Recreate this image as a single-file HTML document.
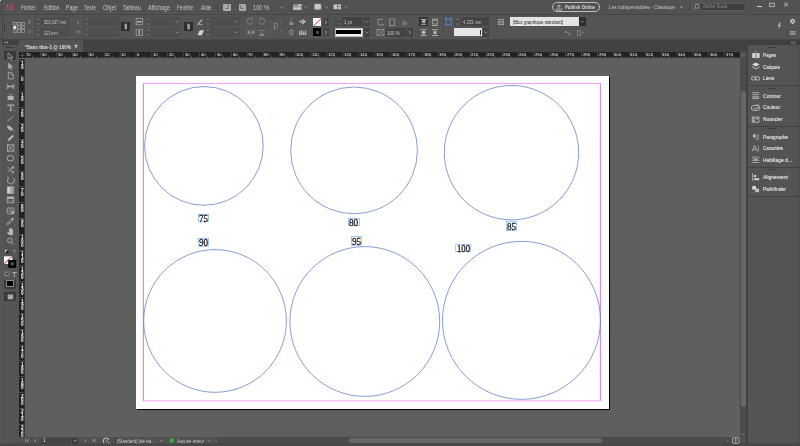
<!DOCTYPE html>
<html><head><meta charset="utf-8">
<style>
*{margin:0;padding:0;box-sizing:border-box}
html,body{width:800px;height:446px;overflow:hidden;background:#535353;font-family:"Liberation Sans",sans-serif;position:relative}
.a{position:absolute}
.t{white-space:nowrap}

</style></head><body>
<div class="a" style="left:0;top:0;width:800px;height:446px;overflow:hidden;filter:blur(0.3px)">
<div class="a" style="left:0px;top:0px;width:800px;height:14px;background:#525252;"></div>
<div class="a" style="left:0px;top:13.5px;width:800px;height:1px;background:#464646;"></div>
<div class="a" style="left:0px;top:14.5px;width:800px;height:24px;background:#545454;"></div>
<div class="a" style="left:0px;top:38.5px;width:800px;height:1.9px;background:#474747;"></div>
<div class="a" style="left:0px;top:40px;width:2.2px;height:406px;background:#565656;"></div>
<div class="a" style="left:1.9px;top:40px;width:0.7px;height:406px;background:#474747;"></div>
<div class="a" style="left:2.2px;top:40px;width:16.6px;height:406px;background:#545454;"></div>
<div class="a" style="left:2.2px;top:40px;width:16.6px;height:4.9px;background:#424242;"></div>
<div class="a" style="left:18.6px;top:40px;width:0.6px;height:406px;background:#3e3e3e;"></div>
<div class="a" style="left:19px;top:40px;width:728px;height:12px;background:#424242;"></div>
<div class="a" style="left:19px;top:40px;width:64.4px;height:12px;background:#545454;"></div>
<div class="a" style="left:25px;top:58px;width:715px;height:379px;background:#5f5f5f;"></div>
<div class="a" style="left:19px;top:52px;width:721px;height:6.2px;background:#222222;"></div>
<div class="a" style="left:19px;top:52px;width:6.2px;height:385px;background:#222222;"></div>
<div class="a" style="left:740px;top:52px;width:6.4px;height:385px;background:#4b4b4b;"></div>
<div class="a" style="left:740px;top:52px;width:6.4px;height:6.2px;background:#535353;"></div>
<div class="a" style="left:740.5px;top:91px;width:5.4px;height:316px;background:#676767;border-radius:2.7px"></div>
<div class="a" style="left:19px;top:437px;width:727.4px;height:6.5px;background:#515151;"></div>
<div class="a" style="left:216px;top:437.3px;width:524px;height:6.1px;background:#4b4b4b;"></div>
<div class="a" style="left:348.8px;top:437.5px;width:253.4px;height:5.8px;background:#676767;border-radius:2.9px"></div>
<div class="a" style="left:0px;top:443.4px;width:800px;height:2.6px;background:#484848;"></div>
<div class="a" style="left:746.4px;top:40px;width:1.4px;height:403.4px;background:#414141;"></div>
<div class="a" style="left:747.6px;top:40px;width:52.4px;height:403.4px;background:#545454;"></div>
<div class="a" style="left:747.6px;top:40px;width:52.4px;height:5.2px;background:#3f3f3f;"></div>
<div class="a t" style="left:5.9px;top:2.782px;font:normal 9.000px/9.000px 'Liberation Sans';color:#cc3f80;transform:scaleX(0.9593);transform-origin:0 0;-webkit-text-stroke:0.2px #cc3f80;">Id</div>
<div class="a" style="left:0px;top:0px;width:1.3px;height:1.3px;background:#dcdcdc;"></div>
<div class="a" style="left:1.3px;top:0px;width:0.7px;height:14px;background:#4a4a4a;"></div>
<div class="a t" style="left:21.4px;top:5.167px;font:normal 6.300px/6.300px 'Liberation Sans';color:#c6c6c6;transform:scaleX(0.7727);transform-origin:0 0;">Fichier</div>
<div class="a t" style="left:43.5px;top:5.167px;font:normal 6.300px/6.300px 'Liberation Sans';color:#c6c6c6;transform:scaleX(0.7999);transform-origin:0 0;">Edition</div>
<div class="a t" style="left:65.5px;top:5.167px;font:normal 6.300px/6.300px 'Liberation Sans';color:#c6c6c6;transform:scaleX(0.8160);transform-origin:0 0;">Page</div>
<div class="a t" style="left:84px;top:5.167px;font:normal 6.300px/6.300px 'Liberation Sans';color:#c6c6c6;transform:scaleX(0.7973);transform-origin:0 0;">Texte</div>
<div class="a t" style="left:103px;top:5.167px;font:normal 6.300px/6.300px 'Liberation Sans';color:#c6c6c6;transform:scaleX(0.8638);transform-origin:0 0;">Objet</div>
<div class="a t" style="left:123px;top:5.167px;font:normal 6.300px/6.300px 'Liberation Sans';color:#c6c6c6;transform:scaleX(0.8025);transform-origin:0 0;">Tableau</div>
<div class="a t" style="left:148px;top:5.167px;font:normal 6.300px/6.300px 'Liberation Sans';color:#c6c6c6;transform:scaleX(0.8416);transform-origin:0 0;">Affichage</div>
<div class="a t" style="left:177px;top:5.167px;font:normal 6.300px/6.300px 'Liberation Sans';color:#c6c6c6;transform:scaleX(0.7373);transform-origin:0 0;">Fenêtre</div>
<div class="a t" style="left:200.5px;top:5.167px;font:normal 6.300px/6.300px 'Liberation Sans';color:#c6c6c6;transform:scaleX(0.8331);transform-origin:0 0;">Aide</div>
<div class="a" style="left:216.5px;top:3px;width:0.6px;height:8px;background:#4a4a4a;"></div>
<div class="a" style="left:223.3px;top:3.5px;width:7.4px;height:7.4px;background:#ababab;border-radius:1px"></div>
<div class="a" style="left:224.9px;top:5.1px;width:4.2px;height:4.2px;background:#7a7a7a;"></div>
<div class="a t" style="left:225.3px;top:5.722px;font:bold 3.400px/3.400px 'Liberation Sans';color:#c8c8c8;transform:scaleX(0.9023);transform-origin:0 0;">Br</div>
<div class="a" style="left:238.5px;top:3.5px;width:7.4px;height:7.4px;background:#ababab;border-radius:1px"></div>
<div class="a" style="left:240.1px;top:5.1px;width:4.2px;height:4.2px;background:#7a7a7a;"></div>
<div class="a t" style="left:240.5px;top:5.722px;font:bold 3.400px/3.400px 'Liberation Sans';color:#c8c8c8;transform:scaleX(1.0028);transform-origin:0 0;">St</div>
<div class="a t" style="left:253px;top:5.167px;font:normal 6.300px/6.300px 'Liberation Sans';color:#c6c6c6;transform:scaleX(0.8961);transform-origin:0 0;">100 %</div>
<svg class="a" style="left:0;top:0" width="800" height="446" viewBox="0 0 800 446"><path d="M280.5 6.8l1.5 1.5 1.5-1.5" fill="none" stroke="#9a9a9a" stroke-width="0.7"/></svg>
<div class="a" style="left:290px;top:3px;width:0.6px;height:8px;background:#4a4a4a;"></div>
<svg class="a" style="left:0;top:0" width="800" height="446" viewBox="0 0 800 446"><rect x="293" y="4" width="4.4" height="2.2" fill="#8a8a8a"/><rect x="293" y="6.4" width="8.6" height="3.4" fill="#c8c8c8"/><rect x="293" y="7.6" width="8.6" height="0.5" fill="#8a8a8a"/><rect x="297.8" y="4" width="3.8" height="2.2" fill="#b8b8b8"/><path d="M304.2 6.6l1.5 1.3 1.5-1.3" fill="none" stroke="#9a9a9a" stroke-width="0.7"/><rect x="314.4" y="3.8" width="6.8" height="5.8" fill="#c8c8c8"/><path d="M314 3.4l1.6 1.6M321.6 3.4l-1.6 1.6M314 10l1.6-1.6M321.6 10l-1.6-1.6" stroke="#5a5a5a" stroke-width="0.6"/><path d="M325 6.6l1.5 1.3 1.5-1.3" fill="none" stroke="#9a9a9a" stroke-width="0.7"/><g fill="#c8c8c8"><rect x="333.6" y="4.4" width="3.4" height="4.8"/><rect x="337.6" y="4.4" width="3.4" height="2.1"/><rect x="337.6" y="7.1" width="3.4" height="2.1"/></g><path d="M345 6.6l1.5 1.3 1.5-1.3" fill="none" stroke="#9a9a9a" stroke-width="0.7"/></svg>
<div class="a" style="left:552px;top:1.6px;width:48px;height:10.8px;background:transparent;border:0.9px solid #bdbdbd;border-radius:5.4px"></div>
<svg class="a" style="left:0;top:0" width="800" height="446" viewBox="0 0 800 446"><g fill="none" stroke="#cfcfcf" stroke-width="0.8"><path d="M559 9.5V5M557.2 6.6L559 4.8 560.8 6.6M556.6 8.2v1.9h4.8V8.2"/></g></svg>
<div class="a t" style="left:565px;top:4.56px;font:bold 5.600px/5.600px 'Liberation Sans';color:#dcdcdc;transform:scaleX(0.7661);transform-origin:0 0;">Publish Online</div>
<div class="a" style="left:603.8px;top:3px;width:0.6px;height:8px;background:#4a4a4a;"></div>
<div class="a t" style="left:609px;top:4.86px;font:normal 5.600px/5.600px 'Liberation Sans';color:#c6c6c6;transform:scaleX(0.8559);transform-origin:0 0;">Les indispensables - Classique</div>
<svg class="a" style="left:0;top:0" width="800" height="446" viewBox="0 0 800 446"><path d="M680 6.6h3l-1.5 1.6z" fill="#b0b0b0"/></svg>
<div class="a" style="left:688.5px;top:3px;width:0.6px;height:8px;background:#4a4a4a;"></div>
<div class="a" style="left:692.7px;top:2.8px;width:53.6px;height:8.6px;background:#3f3f3f;border:0.6px solid #5a5a5a;border-radius:1px"></div>
<svg class="a" style="left:0;top:0" width="800" height="446" viewBox="0 0 800 446"><g fill="none" stroke="#c0c0c0" stroke-width="0.8"><circle cx="697.2" cy="6.3" r="2"/><path d="M695.8 7.8l-1.6 1.8"/></g><path d="M699.5 8.6h1.8l-0.9 1z" fill="#b0b0b0"/></svg>
<div class="a t" style="left:703px;top:4.429px;font:normal 5.400px/5.400px 'Liberation Sans';color:#8c8c8c;transform:scaleX(0.7852);transform-origin:0 0;">Adobe Stock</div>
<div class="a" style="left:756.5px;top:5.7px;width:5px;height:0.9px;background:#cfcfcf;"></div>
<div class="a" style="left:765.5px;top:1px;width:0.5px;height:11px;background:#4d4d4d;"></div>
<div class="a" style="left:777.6px;top:1px;width:0.5px;height:11px;background:#4d4d4d;"></div>
<svg class="a" style="left:0;top:0" width="800" height="446" viewBox="0 0 800 446"><rect x="769.6" y="3.2" width="4.6" height="3.2" fill="none" stroke="#c8c8c8" stroke-width="0.8"/><path d="M784 2.8l4 3.6M788 2.8l-4 3.6" stroke="#cfcfcf" stroke-width="0.8"/></svg>
<div class="a" style="left:1.8px;top:15px;width:0.7px;height:23.5px;background:#474747;"></div>
<div class="a" style="left:3.9px;top:22.6px;width:1.2px;height:8.4px;background:#3c3c3c;"></div>
<svg class="a" style="left:0;top:0" width="800" height="446" viewBox="0 0 800 446"><g fill="none" stroke="#b0b0b0" stroke-width="0.6"><rect x="13.25" y="22.3" width="2.9" height="2.8"/><rect x="13.25" y="29.8" width="2.9" height="2.8"/><rect x="17.400000000000002" y="22.3" width="2.9" height="2.8"/><rect x="17.400000000000002" y="26.05" width="2.9" height="2.8"/><rect x="17.400000000000002" y="29.8" width="2.9" height="2.8"/><rect x="21.55" y="22.3" width="2.9" height="2.8"/><rect x="21.55" y="26.05" width="2.9" height="2.8"/><rect x="21.55" y="29.8" width="2.9" height="2.8"/></g><circle cx="14.7" cy="27.45" r="1.6" fill="#f4f4f4"/></svg>
<div class="a t" style="left:27.6px;top:20.937px;font:normal 4.800px/4.800px 'Liberation Sans';color:#a8a8a8;transform:scaleX(0.8866);transform-origin:0 0;">X :</div>
<div class="a t" style="left:27.6px;top:31.337px;font:normal 4.800px/4.800px 'Liberation Sans';color:#a8a8a8;transform:scaleX(0.8866);transform-origin:0 0;">Y :</div>
<div class="a" style="left:34.2px;top:17.3px;width:7.8px;height:8.6px;background:#4d4d4d;"></div>
<svg class="a" style="left:0;top:0" width="800" height="446" viewBox="0 0 800 446"><path d="M36.300000000000004 19.900000000000002l1.8-1.3 1.8 1.3M36.300000000000004 23.299999999999997l1.8 1.3 1.8-1.3" fill="none" stroke="#8e8e8e" stroke-width="0.6"/></svg>
<div class="a" style="left:34.2px;top:28.0px;width:7.8px;height:8.6px;background:#4d4d4d;"></div>
<svg class="a" style="left:0;top:0" width="800" height="446" viewBox="0 0 800 446"><path d="M36.300000000000004 30.6l1.8-1.3 1.8 1.3M36.300000000000004 34.0l1.8 1.3 1.8-1.3" fill="none" stroke="#8e8e8e" stroke-width="0.6"/></svg>
<div class="a" style="left:42.1px;top:17.3px;width:28.2px;height:8.6px;background:#4e4e4e;"></div>
<div class="a" style="left:42.1px;top:28.0px;width:28.2px;height:8.6px;background:#4e4e4e;"></div>
<div class="a t" style="left:44px;top:20.39px;font:normal 5.800px/5.800px 'Liberation Sans';color:#c8c8c8;transform:scaleX(0.6828);transform-origin:0 0;">302,167 mm</div>
<div class="a t" style="left:44px;top:30.89px;font:normal 5.800px/5.800px 'Liberation Sans';color:#c8c8c8;transform:scaleX(0.6447);transform-origin:0 0;">213 mm</div>
<div class="a t" style="left:76.8px;top:20.937px;font:normal 4.800px/4.800px 'Liberation Sans';color:#a8a8a8;transform:scaleX(0.8250);transform-origin:0 0;">L :</div>
<div class="a t" style="left:76.8px;top:31.337px;font:normal 4.800px/4.800px 'Liberation Sans';color:#a8a8a8;transform:scaleX(0.7178);transform-origin:0 0;">H :</div>
<div class="a" style="left:82.6px;top:17.3px;width:7.8px;height:8.6px;background:#4d4d4d;"></div>
<svg class="a" style="left:0;top:0" width="800" height="446" viewBox="0 0 800 446"><path d="M84.7 19.900000000000002l1.8-1.3 1.8 1.3M84.7 23.299999999999997l1.8 1.3 1.8-1.3" fill="none" stroke="#8e8e8e" stroke-width="0.6"/></svg>
<div class="a" style="left:82.6px;top:28.0px;width:7.8px;height:8.6px;background:#4d4d4d;"></div>
<svg class="a" style="left:0;top:0" width="800" height="446" viewBox="0 0 800 446"><path d="M84.7 30.6l1.8-1.3 1.8 1.3M84.7 34.0l1.8 1.3 1.8-1.3" fill="none" stroke="#8e8e8e" stroke-width="0.6"/></svg>
<div class="a" style="left:90.4px;top:17.3px;width:28.8px;height:8.6px;background:#4e4e4e;"></div>
<div class="a" style="left:90.4px;top:28.0px;width:28.8px;height:8.6px;background:#4e4e4e;"></div>
<div class="a" style="left:121.2px;top:22px;width:9px;height:9.2px;background:#2d2d2d;border-radius:0.8px"></div>
<svg class="a" style="left:0;top:0" width="800" height="446" viewBox="0 0 800 446"><rect x="124.6" y="23.6" width="2.4" height="6" rx="1.1" fill="#b4b4b4"/><path d="M125.8 24.6v1.4M125.8 27.2v1.4" stroke="#3a3a3a" stroke-width="0.5"/><g fill="none" stroke="#b4b4b4" stroke-width="0.6"><rect x="136.1" y="18.6" width="6.2" height="6.2"/></g><g fill="#d0d0d0"><rect x="137.2" y="21.4" width="4" height="0.9"/><path d="M137 21.85l1.2-1.1v2.2zM141.4 21.85l-1.2-1.1v2.2z"/></g><g fill="none" stroke="#b4b4b4" stroke-width="0.6"><rect x="136.1" y="29.3" width="6.2" height="6.2"/></g><g fill="#d0d0d0"><rect x="138.75" y="30.4" width="0.9" height="4"/><path d="M139.2 30.2l-1.1 1.2h2.2zM139.2 34.6l-1.1-1.2h2.2z"/></g></svg>
<div class="a" style="left:144.6px;top:17.3px;width:7.8px;height:8.6px;background:#4d4d4d;"></div>
<svg class="a" style="left:0;top:0" width="800" height="446" viewBox="0 0 800 446"><path d="M146.7 19.900000000000002l1.8-1.3 1.8 1.3M146.7 23.299999999999997l1.8 1.3 1.8-1.3" fill="none" stroke="#8e8e8e" stroke-width="0.6"/></svg>
<div class="a" style="left:144.6px;top:28.0px;width:7.8px;height:8.6px;background:#4d4d4d;"></div>
<svg class="a" style="left:0;top:0" width="800" height="446" viewBox="0 0 800 446"><path d="M146.7 30.6l1.8-1.3 1.8 1.3M146.7 34.0l1.8 1.3 1.8-1.3" fill="none" stroke="#8e8e8e" stroke-width="0.6"/></svg>
<div class="a" style="left:152.4px;top:17.3px;width:27.6px;height:8.6px;background:#4e4e4e;"></div>
<div class="a" style="left:152.4px;top:28.0px;width:27.6px;height:8.6px;background:#4e4e4e;"></div>
<svg class="a" style="left:0;top:0" width="800" height="446" viewBox="0 0 800 446"><path d="M175.4 21.1l1.6 1.3 1.6-1.3" fill="none" stroke="#9c9c9c" stroke-width="0.7"/><path d="M175.4 31.7l1.6 1.3 1.6-1.3" fill="none" stroke="#9c9c9c" stroke-width="0.7"/></svg>
<div class="a" style="left:184px;top:22px;width:9.2px;height:9.2px;background:#2d2d2d;border-radius:0.8px"></div>
<svg class="a" style="left:0;top:0" width="800" height="446" viewBox="0 0 800 446"><rect x="187.4" y="23.6" width="2.4" height="6" rx="1.1" fill="#b4b4b4"/><path d="M188.6 24.6v1.4M188.6 27.2v1.4" stroke="#3a3a3a" stroke-width="0.5"/><g fill="#d2d2d2"><path d="M197 24.6l4.6-5.2 0.8 0.7-3.6 3.8h3.8v0.7z"/><path d="M197.5 35.2l2.2-5h4.2l-2.2 5z"/></g></svg>
<div class="a" style="left:204.2px;top:17.3px;width:7.8px;height:8.6px;background:#4d4d4d;"></div>
<svg class="a" style="left:0;top:0" width="800" height="446" viewBox="0 0 800 446"><path d="M206.29999999999998 19.900000000000002l1.8-1.3 1.8 1.3M206.29999999999998 23.299999999999997l1.8 1.3 1.8-1.3" fill="none" stroke="#8e8e8e" stroke-width="0.6"/></svg>
<div class="a" style="left:204.2px;top:28.0px;width:7.8px;height:8.6px;background:#4d4d4d;"></div>
<svg class="a" style="left:0;top:0" width="800" height="446" viewBox="0 0 800 446"><path d="M206.29999999999998 30.6l1.8-1.3 1.8 1.3M206.29999999999998 34.0l1.8 1.3 1.8-1.3" fill="none" stroke="#8e8e8e" stroke-width="0.6"/></svg>
<div class="a" style="left:212px;top:17.3px;width:28px;height:8.6px;background:#4e4e4e;"></div>
<div class="a" style="left:212px;top:28.0px;width:28px;height:8.6px;background:#4e4e4e;"></div>
<svg class="a" style="left:0;top:0" width="800" height="446" viewBox="0 0 800 446"><path d="M234.6 21.1l1.6 1.3 1.6-1.3" fill="none" stroke="#9c9c9c" stroke-width="0.7"/><path d="M234.6 31.7l1.6 1.3 1.6-1.3" fill="none" stroke="#9c9c9c" stroke-width="0.7"/><g fill="none" stroke="#8a8a8a" stroke-width="0.8"><path d="M253 21.2a3 3 0 1 1-1.2-2.4"/><path d="M252 17.8l0.3 1.4-1.5 0.2"/><path d="M259 21.2a3 3 0 1 0 1.2-2.4"/><path d="M260.2 17.8l-0.3 1.4 1.5 0.2"/></g><g fill="#8a8a8a"><path d="M247.6 29.6v5.6l3-2.8z M254.4 29.6v5.6l-3-2.8z"/><path d="M258.3 35.8h7l-3.5-3z"/></g><path d="M251 29v7M258.5 30.6h6.4M261.7 29v1.6" stroke="#8a8a8a" stroke-width="0.6" fill="none"/><g fill="none" stroke="#8a8a8a" stroke-width="0.6"><path d="M270.2 22.4v-0.8h1.2M281.2 22.4v-0.8h-1.2M270.2 30.6v0.8h1.2M281.2 30.6v0.8h-1.2"/></g></svg>
<div class="a t" style="left:272.6px;top:18.806px;font:normal 42.000px/42.000px 'Liberation Serif';color:#909090;transform:scale(0.2500,0.2500);transform-origin:0 0;">p</div>
<div class="a" style="left:285.4px;top:17px;width:0.6px;height:19.5px;background:#4d4d4d;"></div>
<svg class="a" style="left:0;top:0" width="800" height="446" viewBox="0 0 800 446"><g fill="#8e8e8e"><path d="M291.3 18v4.5" stroke="#8e8e8e" stroke-width="0.8"/><rect x="289.2" y="22.3" width="4.3" height="1.8"/><path d="M288.5 25h5.6l-2.8-1.4z"/></g><g fill="#c8c8c8"><path d="M299.2 21.6l2.2-1.6v3.2zM306 21.6l-2.2-1.6v3.2z"/><rect x="301.8" y="19.5" width="0.8" height="4.6"/><rect x="303" y="19.5" width="0.8" height="4.6"/></g><g fill="#8e8e8e"><circle cx="291.3" cy="32.2" r="2.2" fill="none" stroke="#8e8e8e" stroke-width="0.8"/><path d="M291.3 28.6v7.2" stroke="#8e8e8e" stroke-width="0.8"/></g><g fill="#c8c8c8"><rect x="299.2" y="31" width="1" height="3.6"/><rect x="301.2" y="30" width="1" height="4.6"/><rect x="303.2" y="31.4" width="1" height="3.2"/><rect x="305.2" y="30.6" width="1" height="4"/><rect x="299" y="33.8" width="7.4" height="0.7"/></g></svg>
<div class="a" style="left:313px;top:18.3px;width:8.4px;height:8.2px;background:#f8f8f8;"></div>
<svg class="a" style="left:0;top:0" width="800" height="446" viewBox="0 0 800 446"><path d="M313.4 26.2L321.2 18.6" stroke="#e23636" stroke-width="1"/></svg>
<div class="a" style="left:322.8px;top:18.3px;width:6.2px;height:8.2px;background:#434343;"></div>
<svg class="a" style="left:0;top:0" width="800" height="446" viewBox="0 0 800 446"><path d="M325 20.6l1.6 1.7-1.6 1.7" fill="none" stroke="#c8c8c8" stroke-width="0.7"/></svg>
<div class="a" style="left:313px;top:28.3px;width:8.4px;height:8.2px;background:#000;"></div>
<div class="a" style="left:315.6px;top:30.8px;width:3.2px;height:3.2px;background:#4a4a4a;"></div>
<div class="a" style="left:322.8px;top:28.3px;width:6.2px;height:8.2px;background:#434343;"></div>
<svg class="a" style="left:0;top:0" width="800" height="446" viewBox="0 0 800 446"><path d="M325 30.6l1.6 1.7-1.6 1.7" fill="none" stroke="#c8c8c8" stroke-width="0.7"/></svg>
<div class="a" style="left:332.6px;top:17px;width:0.6px;height:19.5px;background:#4d4d4d;"></div>
<div class="a" style="left:335px;top:17.3px;width:7.8px;height:8.6px;background:#4d4d4d;"></div>
<svg class="a" style="left:0;top:0" width="800" height="446" viewBox="0 0 800 446"><path d="M337.09999999999997 19.900000000000002l1.8-1.3 1.8 1.3M337.09999999999997 23.299999999999997l1.8 1.3 1.8-1.3" fill="none" stroke="#8e8e8e" stroke-width="0.6"/></svg>
<div class="a" style="left:335px;top:17.3px;width:7.8px;height:8.6px;background:#484848;"></div>
<svg class="a" style="left:0;top:0" width="800" height="446" viewBox="0 0 800 446"><path d="M337.1 19.900000000000002l1.8-1.3 1.8 1.3M337.1 23.3l1.8 1.3 1.8-1.3" fill="none" stroke="#8e8e8e" stroke-width="0.6"/></svg>
<div class="a" style="left:342.8px;top:17.3px;width:20.6px;height:8.6px;background:#434343;"></div>
<div class="a t" style="left:344.4px;top:20.39px;font:normal 5.800px/5.800px 'Liberation Sans';color:#c8c8c8;transform:scaleX(0.8067);transform-origin:0 0;">1 pt</div>
<div class="a" style="left:363.8px;top:17.3px;width:6.4px;height:8.6px;background:#434343;"></div>
<svg class="a" style="left:0;top:0" width="800" height="446" viewBox="0 0 800 446"><path d="M365.4 21.1l1.6 1.3 1.6-1.3" fill="none" stroke="#9c9c9c" stroke-width="0.7"/></svg>
<div class="a" style="left:334.6px;top:28.2px;width:28.6px;height:8.4px;background:#f4f4f4;border:0.6px solid #bbb;border-radius:0.5px"></div>
<div class="a" style="left:336.4px;top:30.2px;width:25px;height:4.2px;background:#000;"></div>
<div class="a" style="left:363.8px;top:28.0px;width:6.4px;height:8.6px;background:#434343;"></div>
<svg class="a" style="left:0;top:0" width="800" height="446" viewBox="0 0 800 446"><path d="M365.4 31.7l1.6 1.3 1.6-1.3" fill="none" stroke="#9c9c9c" stroke-width="0.7"/></svg>
<div class="a" style="left:373px;top:17px;width:0.6px;height:19.5px;background:#4d4d4d;"></div>
<svg class="a" style="left:0;top:0" width="800" height="446" viewBox="0 0 800 446"><g fill="none" stroke="#9a9a9a" stroke-width="0.8"><path d="M383 19.5h-5v5.5h5.5"/><rect x="389.6" y="19" width="5" height="6.4" rx="0.5"/></g><circle cx="383.6" cy="24.6" r="0.6" fill="#9a9a9a"/><path d="M389.2 25.6h6" stroke="#9a9a9a" stroke-width="0.6"/></svg>
<div class="a t" style="left:402.4px;top:19.505px;font:italic 6.800px/6.800px 'Liberation Serif';color:#a8a8a8;">fx</div>
<svg class="a" style="left:0;top:0" width="800" height="446" viewBox="0 0 800 446"><g fill="none" stroke="#9a9a9a" stroke-width="0.7"><rect x="377" y="29.4" width="7" height="6"/><path d="M377 29.4l7 6M384 29.4l-7 6"/></g></svg>
<div class="a" style="left:385.4px;top:28.0px;width:20.8px;height:8.6px;background:#434343;"></div>
<div class="a t" style="left:386.6px;top:30.89px;font:normal 5.800px/5.800px 'Liberation Sans';color:#c8c8c8;transform:scaleX(0.7666);transform-origin:0 0;">100 %</div>
<div class="a" style="left:406.8px;top:28.0px;width:6.4px;height:8.6px;background:#434343;"></div>
<svg class="a" style="left:0;top:0" width="800" height="446" viewBox="0 0 800 446"><path d="M409 30.6l1.6 1.7-1.6 1.7" fill="none" stroke="#c8c8c8" stroke-width="0.7"/></svg>
<div class="a" style="left:417.6px;top:17px;width:0.6px;height:19.5px;background:#4d4d4d;"></div>
<div class="a" style="left:419px;top:17.3px;width:9.2px;height:9.2px;background:#333333;border-radius:0.8px"></div>
<svg class="a" style="left:0;top:0" width="800" height="446" viewBox="0 0 800 446"><g fill="#cfcfcf"><rect x="421" y="19" width="5.4" height="0.8"/><rect x="421" y="23.8" width="5.4" height="0.8"/><path d="M421.6 20.6h4.2l-0.9 2.2h-2.4z"/></g><g fill="#bdbdbd"><rect x="432" y="18.8" width="6" height="0.8"/><rect x="432" y="25" width="6" height="0.8"/><rect x="432.6" y="20.6" width="4.8" height="3.4" fill="none" stroke="#bdbdbd" stroke-width="0.6"/></g><g fill="#bdbdbd"><rect x="420.6" y="29.4" width="6" height="0.8"/><rect x="420.6" y="35" width="6" height="0.8"/><circle cx="423.6" cy="32.6" r="1.9"/></g><g fill="#bdbdbd"><rect x="432" y="29.4" width="6" height="0.8"/><rect x="432" y="35" width="6" height="0.8"/><rect x="433.6" y="31.2" width="2.8" height="2.8"/></g></svg>
<div class="a" style="left:443px;top:17px;width:0.6px;height:19.5px;background:#4d4d4d;"></div>
<svg class="a" style="left:0;top:0" width="800" height="446" viewBox="0 0 800 446"><g><rect x="446" y="19" width="5" height="5.4" fill="none" stroke="#5a8fd6" stroke-width="0.6"/><g fill="#3d86e0"><rect x="445" y="18" width="2" height="2"/><rect x="450" y="18" width="2" height="2"/><rect x="445" y="23.4" width="2" height="2"/><rect x="450" y="23.4" width="2" height="2"/></g></g></svg>
<div class="a" style="left:453.8px;top:17.3px;width:7.8px;height:8.6px;background:#4d4d4d;"></div>
<svg class="a" style="left:0;top:0" width="800" height="446" viewBox="0 0 800 446"><path d="M455.9 19.900000000000002l1.8-1.3 1.8 1.3M455.9 23.299999999999997l1.8 1.3 1.8-1.3" fill="none" stroke="#8e8e8e" stroke-width="0.6"/></svg>
<div class="a" style="left:461.6px;top:17.3px;width:27.8px;height:8.6px;background:#434343;"></div>
<div class="a t" style="left:463px;top:20.39px;font:normal 5.800px/5.800px 'Liberation Sans';color:#c8c8c8;transform:scaleX(0.7139);transform-origin:0 0;">4,233 mm</div>
<div class="a" style="left:453.8px;top:28.4px;width:28.4px;height:8px;background:#e6e6e6;border-radius:0.5px"></div>
<div class="a" style="left:480.4px;top:29.6px;width:0.6px;height:5.8px;background:#333;"></div>
<div class="a" style="left:482.8px;top:28.0px;width:6.6px;height:8.6px;background:#434343;"></div>
<svg class="a" style="left:0;top:0" width="800" height="446" viewBox="0 0 800 446"><path d="M484.4 31.7l1.6 1.3 1.6-1.3" fill="none" stroke="#9c9c9c" stroke-width="0.7"/></svg>
<div class="a" style="left:495.6px;top:17px;width:0.6px;height:19.5px;background:#4d4d4d;"></div>
<svg class="a" style="left:0;top:0" width="800" height="446" viewBox="0 0 800 446"><g fill="none" stroke="#a8a8a8" stroke-width="0.8"><rect x="498.2" y="19.6" width="5.4" height="5"/><rect x="499.8" y="21.2" width="2.2" height="1.8"/></g></svg>
<div class="a" style="left:509.6px;top:17.4px;width:69px;height:8.8px;background:#e4e4e4;"></div>
<div class="a t" style="left:512.6px;top:18.821px;font:normal 6.000px/6.000px 'Liberation Sans';color:#2a2a2a;transform:scaleX(0.7312);transform-origin:0 0;">[Bloc graphique standard]</div>
<div class="a" style="left:579px;top:17.4px;width:6.6px;height:8.8px;background:#2f2f2f;"></div>
<svg class="a" style="left:0;top:0" width="800" height="446" viewBox="0 0 800 446"><path d="M580.6999999999999 21.1l1.6 1.3 1.6-1.3" fill="none" stroke="#9c9c9c" stroke-width="0.7"/><g fill="#9a9a9a"><path d="M565.4 30.4l2.4 2.2-2.4 0.6z"/><path d="M569 31.6v3.2h2.2" fill="none" stroke="#9a9a9a" stroke-width="0.6"/><rect x="577.4" y="30.2" width="3" height="5" fill="none" stroke="#9a9a9a" stroke-width="0.6"/><path d="M581.8 34.6l2-3" stroke="#9a9a9a" stroke-width="0.6"/></g><path d="M779.6 22.4l-1.8 3.4h1.6l-1.2 3.4 2.8-4h-1.6l1.2-2.8z" fill="#d0d0d0"/></svg>
<div class="a" style="left:786.6px;top:17px;width:0.6px;height:20px;background:#4d4d4d;"></div>
<svg class="a" style="left:0;top:0" width="800" height="446" viewBox="0 0 800 446"><circle cx="792.6" cy="21.4" r="1.5" fill="none" stroke="#d4d4d4" stroke-width="1.1"/><path d="M794.20 21.40L795.30 21.40M793.73 22.53L794.51 23.31M792.60 23.00L792.60 24.10M791.47 22.53L790.69 23.31M791.00 21.40L789.90 21.40M791.47 20.27L790.69 19.49M792.60 19.80L792.60 18.70M793.73 20.27L794.51 19.49" stroke="#d4d4d4" stroke-width="0.9"/><g fill="#c0c0c0"><rect x="789.8" y="31.4" width="5.8" height="1"/><rect x="789.8" y="33.6" width="5.8" height="1"/></g></svg>
<div class="a t" style="left:25.2px;top:44.66px;font:bold 5.600px/5.600px 'Liberation Sans';color:#e0e0e0;transform:scaleX(0.8287);transform-origin:0 0;">*Sans titre-1 @ 100%</div>
<svg class="a" style="left:0;top:0" width="800" height="446" viewBox="0 0 800 446"><path d="M74.8 45l2.4 2.4M77.2 45l-2.4 2.4" stroke="#d8d8d8" stroke-width="1.2"/><g fill="#d0d0d0"><path d="M4.2 42.6l1.3-1v2zM6.6 42.6l1.3-1v2z"/></g></svg>
<div class="a" style="left:6.4px;top:46.5px;width:7.8px;height:1.1px;background:#3a3a3a;"></div>
<div class="a" style="left:4.2px;top:51.3px;width:11.8px;height:9.2px;background:#3a3a3a;border-radius:0.8px"></div>
<svg class="a" style="left:0;top:0" width="800" height="446" viewBox="0 0 800 446"><path d="M8 52.8v6.4l1.6-1.6 1.3 2.3 0.8-0.4-1.2-2.3h2.4z" fill="none" stroke="#b4b4b4" stroke-width="0.7" stroke-linejoin="round"/><path d="M8.3 62.4v7l1.6-1.7 1.2 2.2 0.9-0.5-1.1-2.1h2.4z" fill="#b4b4b4"/><path d="M8.3 72.3h3l2 2v4.6h-5z" fill="none" stroke="#b4b4b4" stroke-width="0.8"/><path d="M11 73v2h2" fill="none" stroke="#b4b4b4" stroke-width="0.6"/><g stroke="#b4b4b4" stroke-width="0.8" fill="#b4b4b4"><path d="M7.3 83.6v5.6M13.9 83.6v5.6M8 86.4h5.2"/><path d="M8 86.4l1.4-1v2zM13.2 86.4l-1.4-1v2z"/></g><g fill="#b4b4b4"><rect x="7.6" y="96" width="6" height="4" /><path d="M8.4 93.6l2 2 2.2-1.8" fill="none" stroke="#b4b4b4" stroke-width="0.8"/></g><rect x="14.6" y="100" width="0.8" height="0.8" fill="#999"/><path d="M7.4 104.6h6.6v1.6h-0.9v-0.6h-1.7v4.6h0.9v0.7h-3v-0.7h0.9v-4.6h-1.7v0.6h-0.9z" fill="#b4b4b4"/><rect x="14.6" y="110.6" width="0.8" height="0.8" fill="#999"/><path d="M7.6 121.2l5.6-5" stroke="#b4b4b4" stroke-width="0.8"/><path d="M7.4 125.2l2.2 0.8 3.2 2.4-1.6 2.6-3.2-2.2-0.8-1.6z" fill="#b4b4b4"/><path d="M12.2 129.2l1.4 1.6" stroke="#b4b4b4" stroke-width="1"/><rect x="14.6" y="131.8" width="0.8" height="0.8" fill="#999"/><path d="M7.6 141l0.5-2 4.4-4.2 1.5 1.5-4.4 4.2z" fill="#b4b4b4"/><rect x="14.6" y="141.6" width="0.8" height="0.8" fill="#999"/><g fill="none" stroke="#b4b4b4" stroke-width="0.8"><rect x="7.4" y="144.8" width="6.4" height="6.4"/><path d="M7.4 144.8l6.4 6.4M13.8 144.8l-6.4 6.4"/></g><rect x="14.6" y="151.6" width="0.8" height="0.8" fill="#999"/><ellipse cx="10.4" cy="158.3" rx="3.4" ry="2.7" fill="none" stroke="#b4b4b4" stroke-width="0.9"/><rect x="14.6" y="161.6" width="0.8" height="0.8" fill="#999"/><g fill="none" stroke="#b4b4b4" stroke-width="0.8"><path d="M7.4 166.8l5 5M13.2 166.8l-5 5"/><circle cx="12.6" cy="172.2" r="1"/><circle cx="12.8" cy="167.4" r="1"/></g><path d="M12.6 177.6a3.4 3.4 0 1 1-4.6 1.2" fill="none" stroke="#b4b4b4" stroke-width="0.9"/><path d="M7 177l1.6 0.4-0.4 1.6" fill="none" stroke="#b4b4b4" stroke-width="0.7"/><rect x="14.6" y="182.4" width="0.8" height="0.8" fill="#999"/><defs><linearGradient id="gr" x1="0" x2="1"><stop offset="0" stop-color="#e0e0e0"/><stop offset="1" stop-color="#8a8a8a"/></linearGradient></defs><rect x="7.2" y="186.8" width="6.6" height="6.8" fill="url(#gr)" stroke="#b4b4b4" stroke-width="0.5"/><rect x="7.2" y="197" width="6.6" height="5.8" fill="none" stroke="#b4b4b4" stroke-width="0.8"/><rect x="7.2" y="197" width="6.6" height="2" fill="#b4b4b4"/><g fill="#999"><rect x="8.4" y="200" width="1" height="1"/><rect x="10.4" y="200.6" width="1" height="1"/><rect x="12" y="200" width="1" height="1"/></g><rect x="7.2" y="208" width="6.6" height="5.8" rx="0.6" fill="none" stroke="#b4b4b4" stroke-width="0.8"/><path d="M8.6 210.2h3.6M8.6 211.8h2.6" stroke="#b4b4b4" stroke-width="0.6"/><rect x="11.4" y="211.2" width="2.6" height="2.4" fill="#b4b4b4"/><path d="M7.4 224.6l0.4-1.8 3.6-3.6 1.2 1.2-3.6 3.6z" fill="none" stroke="#b4b4b4" stroke-width="0.8"/><path d="M11.2 219l1.6-1.4 1.2 1.2-1.4 1.6z" fill="#b4b4b4"/><rect x="14.6" y="224.6" width="0.8" height="0.8" fill="#999"/><path d="M8.4 234.6l-1.4-2.2 0.8-0.6 1.2 1v-4.2h1v3.2v-3.8h1v3.8v-3.4h1v3.4v-2.6h1v4.4l-0.8 1.8z" fill="#b4b4b4"/><circle cx="9.8" cy="240.4" r="2.3" fill="none" stroke="#b4b4b4" stroke-width="0.8"/><path d="M11.4 242.2l2.2 2.4" stroke="#b4b4b4" stroke-width="1"/><rect x="4.8" y="249.6" width="3" height="3" fill="#fff" stroke="#333" stroke-width="0.4"/><rect x="5.8" y="250.6" width="2.8" height="2.8" fill="#222"/><path d="M5 252.6l2.6-2.6" stroke="#e44" stroke-width="0.5"/><path d="M12.4 250.4h2.4v2.2" fill="none" stroke="#b4b4b4" stroke-width="0.6"/><path d="M14.2 253.4l0.6 0.8 0.6-0.8z" fill="#b4b4b4"/><rect x="4" y="256.3" width="8.2" height="7.6" fill="#fff"/><path d="M4.2 263.6l7.8-7.2" stroke="#e23636" stroke-width="1"/><rect x="8.2" y="260" width="8" height="7.8" fill="#000"/><rect x="10.6" y="262.2" width="3.2" height="3.2" fill="#4e4e4e"/><rect x="4.4" y="271.6" width="5" height="5" fill="#333" stroke="#888" stroke-width="0.5"/><rect x="5.6" y="272.8" width="2.6" height="2.6" fill="none" stroke="#bbb" stroke-width="0.6"/><path d="M12.2 272h4.4v1.2h-0.7v-0.5h-1.1v3.6h0.6v0.5h-2v-0.5h0.6v-3.6h-1.1v0.5h-0.7z" fill="#b8b8b8"/></svg>
<div class="a" style="left:4.2px;top:279.6px;width:12px;height:9px;background:#3a3a3a;border-radius:0.8px"></div>
<div class="a" style="left:7.4px;top:281.2px;width:5.8px;height:5.2px;background:#000;outline:0.6px solid #8a8a8a"></div>
<div class="a" style="left:4.2px;top:292.2px;width:12px;height:9px;background:#3a3a3a;border-radius:0.8px"></div>
<svg class="a" style="left:0;top:0" width="800" height="446" viewBox="0 0 800 446"><rect x="7.6" y="294.4" width="5.6" height="5" fill="#9a9a9a"/><path d="M8.4 295.4l4 3M12.4 295.4l-4 3" stroke="#d0d0d0" stroke-width="0.6"/><rect x="25.96" y="56.9" width="0.5" height="1.1" fill="#606060"/><rect x="27.55" y="56.9" width="0.5" height="1.1" fill="#606060"/><rect x="29.14" y="56.9" width="0.5" height="1.1" fill="#606060"/><rect x="30.73" y="56.9" width="0.5" height="1.1" fill="#606060"/><rect x="32.32" y="55.6" width="0.5" height="2.6" fill="#8a8a8a"/><rect x="33.91" y="56.9" width="0.5" height="1.1" fill="#606060"/><rect x="35.50" y="56.9" width="0.5" height="1.1" fill="#606060"/><rect x="37.10" y="56.9" width="0.5" height="1.1" fill="#606060"/><rect x="38.69" y="56.9" width="0.5" height="1.1" fill="#606060"/><rect x="40.23" y="52" width="0.6" height="6.2" fill="#5e5e5e"/><rect x="41.87" y="56.9" width="0.5" height="1.1" fill="#606060"/><rect x="43.46" y="56.9" width="0.5" height="1.1" fill="#606060"/><rect x="45.05" y="56.9" width="0.5" height="1.1" fill="#606060"/><rect x="46.64" y="56.9" width="0.5" height="1.1" fill="#606060"/><rect x="48.23" y="55.6" width="0.5" height="2.6" fill="#8a8a8a"/><rect x="49.83" y="56.9" width="0.5" height="1.1" fill="#606060"/><rect x="51.42" y="56.9" width="0.5" height="1.1" fill="#606060"/><rect x="53.01" y="56.9" width="0.5" height="1.1" fill="#606060"/><rect x="54.60" y="56.9" width="0.5" height="1.1" fill="#606060"/><rect x="56.14" y="52" width="0.6" height="6.2" fill="#5e5e5e"/><rect x="57.78" y="56.9" width="0.5" height="1.1" fill="#606060"/><rect x="59.37" y="56.9" width="0.5" height="1.1" fill="#606060"/><rect x="60.96" y="56.9" width="0.5" height="1.1" fill="#606060"/><rect x="62.55" y="56.9" width="0.5" height="1.1" fill="#606060"/><rect x="64.15" y="55.6" width="0.5" height="2.6" fill="#8a8a8a"/><rect x="65.74" y="56.9" width="0.5" height="1.1" fill="#606060"/><rect x="67.33" y="56.9" width="0.5" height="1.1" fill="#606060"/><rect x="68.92" y="56.9" width="0.5" height="1.1" fill="#606060"/><rect x="70.51" y="56.9" width="0.5" height="1.1" fill="#606060"/><rect x="72.05" y="52" width="0.6" height="6.2" fill="#5e5e5e"/><rect x="73.69" y="56.9" width="0.5" height="1.1" fill="#606060"/><rect x="75.28" y="56.9" width="0.5" height="1.1" fill="#606060"/><rect x="76.88" y="56.9" width="0.5" height="1.1" fill="#606060"/><rect x="78.47" y="56.9" width="0.5" height="1.1" fill="#606060"/><rect x="80.06" y="55.6" width="0.5" height="2.6" fill="#8a8a8a"/><rect x="81.65" y="56.9" width="0.5" height="1.1" fill="#606060"/><rect x="83.24" y="56.9" width="0.5" height="1.1" fill="#606060"/><rect x="84.83" y="56.9" width="0.5" height="1.1" fill="#606060"/><rect x="86.42" y="56.9" width="0.5" height="1.1" fill="#606060"/><rect x="87.96" y="52" width="0.6" height="6.2" fill="#5e5e5e"/><rect x="89.61" y="56.9" width="0.5" height="1.1" fill="#606060"/><rect x="91.20" y="56.9" width="0.5" height="1.1" fill="#606060"/><rect x="92.79" y="56.9" width="0.5" height="1.1" fill="#606060"/><rect x="94.38" y="56.9" width="0.5" height="1.1" fill="#606060"/><rect x="95.97" y="55.6" width="0.5" height="2.6" fill="#8a8a8a"/><rect x="97.56" y="56.9" width="0.5" height="1.1" fill="#606060"/><rect x="99.15" y="56.9" width="0.5" height="1.1" fill="#606060"/><rect x="100.74" y="56.9" width="0.5" height="1.1" fill="#606060"/><rect x="102.33" y="56.9" width="0.5" height="1.1" fill="#606060"/><rect x="103.88" y="52" width="0.6" height="6.2" fill="#5e5e5e"/><rect x="105.52" y="56.9" width="0.5" height="1.1" fill="#606060"/><rect x="107.11" y="56.9" width="0.5" height="1.1" fill="#606060"/><rect x="108.70" y="56.9" width="0.5" height="1.1" fill="#606060"/><rect x="110.29" y="56.9" width="0.5" height="1.1" fill="#606060"/><rect x="111.88" y="55.6" width="0.5" height="2.6" fill="#8a8a8a"/><rect x="113.47" y="56.9" width="0.5" height="1.1" fill="#606060"/><rect x="115.06" y="56.9" width="0.5" height="1.1" fill="#606060"/><rect x="116.66" y="56.9" width="0.5" height="1.1" fill="#606060"/><rect x="118.25" y="56.9" width="0.5" height="1.1" fill="#606060"/><rect x="119.79" y="52" width="0.6" height="6.2" fill="#5e5e5e"/><rect x="121.43" y="56.9" width="0.5" height="1.1" fill="#606060"/><rect x="123.02" y="56.9" width="0.5" height="1.1" fill="#606060"/><rect x="124.61" y="56.9" width="0.5" height="1.1" fill="#606060"/><rect x="126.20" y="56.9" width="0.5" height="1.1" fill="#606060"/><rect x="127.79" y="55.6" width="0.5" height="2.6" fill="#8a8a8a"/><rect x="129.39" y="56.9" width="0.5" height="1.1" fill="#606060"/><rect x="130.98" y="56.9" width="0.5" height="1.1" fill="#606060"/><rect x="132.57" y="56.9" width="0.5" height="1.1" fill="#606060"/><rect x="134.16" y="56.9" width="0.5" height="1.1" fill="#606060"/><rect x="135.70" y="52" width="0.6" height="6.2" fill="#5e5e5e"/><rect x="137.34" y="56.9" width="0.5" height="1.1" fill="#606060"/><rect x="138.93" y="56.9" width="0.5" height="1.1" fill="#606060"/><rect x="140.52" y="56.9" width="0.5" height="1.1" fill="#606060"/><rect x="142.11" y="56.9" width="0.5" height="1.1" fill="#606060"/><rect x="143.71" y="55.6" width="0.5" height="2.6" fill="#8a8a8a"/><rect x="145.30" y="56.9" width="0.5" height="1.1" fill="#606060"/><rect x="146.89" y="56.9" width="0.5" height="1.1" fill="#606060"/><rect x="148.48" y="56.9" width="0.5" height="1.1" fill="#606060"/><rect x="150.07" y="56.9" width="0.5" height="1.1" fill="#606060"/><rect x="151.61" y="52" width="0.6" height="6.2" fill="#5e5e5e"/><rect x="153.25" y="56.9" width="0.5" height="1.1" fill="#606060"/><rect x="154.84" y="56.9" width="0.5" height="1.1" fill="#606060"/><rect x="156.44" y="56.9" width="0.5" height="1.1" fill="#606060"/><rect x="158.03" y="56.9" width="0.5" height="1.1" fill="#606060"/><rect x="159.62" y="55.6" width="0.5" height="2.6" fill="#8a8a8a"/><rect x="161.21" y="56.9" width="0.5" height="1.1" fill="#606060"/><rect x="162.80" y="56.9" width="0.5" height="1.1" fill="#606060"/><rect x="164.39" y="56.9" width="0.5" height="1.1" fill="#606060"/><rect x="165.98" y="56.9" width="0.5" height="1.1" fill="#606060"/><rect x="167.52" y="52" width="0.6" height="6.2" fill="#5e5e5e"/><rect x="169.17" y="56.9" width="0.5" height="1.1" fill="#606060"/><rect x="170.76" y="56.9" width="0.5" height="1.1" fill="#606060"/><rect x="172.35" y="56.9" width="0.5" height="1.1" fill="#606060"/><rect x="173.94" y="56.9" width="0.5" height="1.1" fill="#606060"/><rect x="175.53" y="55.6" width="0.5" height="2.6" fill="#8a8a8a"/><rect x="177.12" y="56.9" width="0.5" height="1.1" fill="#606060"/><rect x="178.71" y="56.9" width="0.5" height="1.1" fill="#606060"/><rect x="180.30" y="56.9" width="0.5" height="1.1" fill="#606060"/><rect x="181.89" y="56.9" width="0.5" height="1.1" fill="#606060"/><rect x="183.44" y="52" width="0.6" height="6.2" fill="#5e5e5e"/><rect x="185.08" y="56.9" width="0.5" height="1.1" fill="#606060"/><rect x="186.67" y="56.9" width="0.5" height="1.1" fill="#606060"/><rect x="188.26" y="56.9" width="0.5" height="1.1" fill="#606060"/><rect x="189.85" y="56.9" width="0.5" height="1.1" fill="#606060"/><rect x="191.44" y="55.6" width="0.5" height="2.6" fill="#8a8a8a"/><rect x="193.03" y="56.9" width="0.5" height="1.1" fill="#606060"/><rect x="194.62" y="56.9" width="0.5" height="1.1" fill="#606060"/><rect x="196.22" y="56.9" width="0.5" height="1.1" fill="#606060"/><rect x="197.81" y="56.9" width="0.5" height="1.1" fill="#606060"/><rect x="199.35" y="52" width="0.6" height="6.2" fill="#5e5e5e"/><rect x="200.99" y="56.9" width="0.5" height="1.1" fill="#606060"/><rect x="202.58" y="56.9" width="0.5" height="1.1" fill="#606060"/><rect x="204.17" y="56.9" width="0.5" height="1.1" fill="#606060"/><rect x="205.76" y="56.9" width="0.5" height="1.1" fill="#606060"/><rect x="207.35" y="55.6" width="0.5" height="2.6" fill="#8a8a8a"/><rect x="208.95" y="56.9" width="0.5" height="1.1" fill="#606060"/><rect x="210.54" y="56.9" width="0.5" height="1.1" fill="#606060"/><rect x="212.13" y="56.9" width="0.5" height="1.1" fill="#606060"/><rect x="213.72" y="56.9" width="0.5" height="1.1" fill="#606060"/><rect x="215.26" y="52" width="0.6" height="6.2" fill="#5e5e5e"/><rect x="216.90" y="56.9" width="0.5" height="1.1" fill="#606060"/><rect x="218.49" y="56.9" width="0.5" height="1.1" fill="#606060"/><rect x="220.08" y="56.9" width="0.5" height="1.1" fill="#606060"/><rect x="221.67" y="56.9" width="0.5" height="1.1" fill="#606060"/><rect x="223.27" y="55.6" width="0.5" height="2.6" fill="#8a8a8a"/><rect x="224.86" y="56.9" width="0.5" height="1.1" fill="#606060"/><rect x="226.45" y="56.9" width="0.5" height="1.1" fill="#606060"/><rect x="228.04" y="56.9" width="0.5" height="1.1" fill="#606060"/><rect x="229.63" y="56.9" width="0.5" height="1.1" fill="#606060"/><rect x="231.17" y="52" width="0.6" height="6.2" fill="#5e5e5e"/><rect x="232.81" y="56.9" width="0.5" height="1.1" fill="#606060"/><rect x="234.40" y="56.9" width="0.5" height="1.1" fill="#606060"/><rect x="236.00" y="56.9" width="0.5" height="1.1" fill="#606060"/><rect x="237.59" y="56.9" width="0.5" height="1.1" fill="#606060"/><rect x="239.18" y="55.6" width="0.5" height="2.6" fill="#8a8a8a"/><rect x="240.77" y="56.9" width="0.5" height="1.1" fill="#606060"/><rect x="242.36" y="56.9" width="0.5" height="1.1" fill="#606060"/><rect x="243.95" y="56.9" width="0.5" height="1.1" fill="#606060"/><rect x="245.54" y="56.9" width="0.5" height="1.1" fill="#606060"/><rect x="247.08" y="52" width="0.6" height="6.2" fill="#5e5e5e"/><rect x="248.73" y="56.9" width="0.5" height="1.1" fill="#606060"/><rect x="250.32" y="56.9" width="0.5" height="1.1" fill="#606060"/><rect x="251.91" y="56.9" width="0.5" height="1.1" fill="#606060"/><rect x="253.50" y="56.9" width="0.5" height="1.1" fill="#606060"/><rect x="255.09" y="55.6" width="0.5" height="2.6" fill="#8a8a8a"/><rect x="256.68" y="56.9" width="0.5" height="1.1" fill="#606060"/><rect x="258.27" y="56.9" width="0.5" height="1.1" fill="#606060"/><rect x="259.86" y="56.9" width="0.5" height="1.1" fill="#606060"/><rect x="261.45" y="56.9" width="0.5" height="1.1" fill="#606060"/><rect x="263.00" y="52" width="0.6" height="6.2" fill="#5e5e5e"/><rect x="264.64" y="56.9" width="0.5" height="1.1" fill="#606060"/><rect x="266.23" y="56.9" width="0.5" height="1.1" fill="#606060"/><rect x="267.82" y="56.9" width="0.5" height="1.1" fill="#606060"/><rect x="269.41" y="56.9" width="0.5" height="1.1" fill="#606060"/><rect x="271.00" y="55.6" width="0.5" height="2.6" fill="#8a8a8a"/><rect x="272.59" y="56.9" width="0.5" height="1.1" fill="#606060"/><rect x="274.18" y="56.9" width="0.5" height="1.1" fill="#606060"/><rect x="275.78" y="56.9" width="0.5" height="1.1" fill="#606060"/><rect x="277.37" y="56.9" width="0.5" height="1.1" fill="#606060"/><rect x="278.91" y="52" width="0.6" height="6.2" fill="#5e5e5e"/><rect x="280.55" y="56.9" width="0.5" height="1.1" fill="#606060"/><rect x="282.14" y="56.9" width="0.5" height="1.1" fill="#606060"/><rect x="283.73" y="56.9" width="0.5" height="1.1" fill="#606060"/><rect x="285.32" y="56.9" width="0.5" height="1.1" fill="#606060"/><rect x="286.91" y="55.6" width="0.5" height="2.6" fill="#8a8a8a"/><rect x="288.51" y="56.9" width="0.5" height="1.1" fill="#606060"/><rect x="290.10" y="56.9" width="0.5" height="1.1" fill="#606060"/><rect x="291.69" y="56.9" width="0.5" height="1.1" fill="#606060"/><rect x="293.28" y="56.9" width="0.5" height="1.1" fill="#606060"/><rect x="294.82" y="52" width="0.6" height="6.2" fill="#5e5e5e"/><rect x="296.46" y="56.9" width="0.5" height="1.1" fill="#606060"/><rect x="298.05" y="56.9" width="0.5" height="1.1" fill="#606060"/><rect x="299.64" y="56.9" width="0.5" height="1.1" fill="#606060"/><rect x="301.23" y="56.9" width="0.5" height="1.1" fill="#606060"/><rect x="302.83" y="55.6" width="0.5" height="2.6" fill="#8a8a8a"/><rect x="304.42" y="56.9" width="0.5" height="1.1" fill="#606060"/><rect x="306.01" y="56.9" width="0.5" height="1.1" fill="#606060"/><rect x="307.60" y="56.9" width="0.5" height="1.1" fill="#606060"/><rect x="309.19" y="56.9" width="0.5" height="1.1" fill="#606060"/><rect x="310.73" y="52" width="0.6" height="6.2" fill="#5e5e5e"/><rect x="312.37" y="56.9" width="0.5" height="1.1" fill="#606060"/><rect x="313.96" y="56.9" width="0.5" height="1.1" fill="#606060"/><rect x="315.56" y="56.9" width="0.5" height="1.1" fill="#606060"/><rect x="317.15" y="56.9" width="0.5" height="1.1" fill="#606060"/><rect x="318.74" y="55.6" width="0.5" height="2.6" fill="#8a8a8a"/><rect x="320.33" y="56.9" width="0.5" height="1.1" fill="#606060"/><rect x="321.92" y="56.9" width="0.5" height="1.1" fill="#606060"/><rect x="323.51" y="56.9" width="0.5" height="1.1" fill="#606060"/><rect x="325.10" y="56.9" width="0.5" height="1.1" fill="#606060"/><rect x="326.64" y="52" width="0.6" height="6.2" fill="#5e5e5e"/><rect x="328.29" y="56.9" width="0.5" height="1.1" fill="#606060"/><rect x="329.88" y="56.9" width="0.5" height="1.1" fill="#606060"/><rect x="331.47" y="56.9" width="0.5" height="1.1" fill="#606060"/><rect x="333.06" y="56.9" width="0.5" height="1.1" fill="#606060"/><rect x="334.65" y="55.6" width="0.5" height="2.6" fill="#8a8a8a"/><rect x="336.24" y="56.9" width="0.5" height="1.1" fill="#606060"/><rect x="337.83" y="56.9" width="0.5" height="1.1" fill="#606060"/><rect x="339.42" y="56.9" width="0.5" height="1.1" fill="#606060"/><rect x="341.01" y="56.9" width="0.5" height="1.1" fill="#606060"/><rect x="342.56" y="52" width="0.6" height="6.2" fill="#5e5e5e"/><rect x="344.20" y="56.9" width="0.5" height="1.1" fill="#606060"/><rect x="345.79" y="56.9" width="0.5" height="1.1" fill="#606060"/><rect x="347.38" y="56.9" width="0.5" height="1.1" fill="#606060"/><rect x="348.97" y="56.9" width="0.5" height="1.1" fill="#606060"/><rect x="350.56" y="55.6" width="0.5" height="2.6" fill="#8a8a8a"/><rect x="352.15" y="56.9" width="0.5" height="1.1" fill="#606060"/><rect x="353.74" y="56.9" width="0.5" height="1.1" fill="#606060"/><rect x="355.34" y="56.9" width="0.5" height="1.1" fill="#606060"/><rect x="356.93" y="56.9" width="0.5" height="1.1" fill="#606060"/><rect x="358.47" y="52" width="0.6" height="6.2" fill="#5e5e5e"/><rect x="360.11" y="56.9" width="0.5" height="1.1" fill="#606060"/><rect x="361.70" y="56.9" width="0.5" height="1.1" fill="#606060"/><rect x="363.29" y="56.9" width="0.5" height="1.1" fill="#606060"/><rect x="364.88" y="56.9" width="0.5" height="1.1" fill="#606060"/><rect x="366.47" y="55.6" width="0.5" height="2.6" fill="#8a8a8a"/><rect x="368.07" y="56.9" width="0.5" height="1.1" fill="#606060"/><rect x="369.66" y="56.9" width="0.5" height="1.1" fill="#606060"/><rect x="371.25" y="56.9" width="0.5" height="1.1" fill="#606060"/><rect x="372.84" y="56.9" width="0.5" height="1.1" fill="#606060"/><rect x="374.38" y="52" width="0.6" height="6.2" fill="#5e5e5e"/><rect x="376.02" y="56.9" width="0.5" height="1.1" fill="#606060"/><rect x="377.61" y="56.9" width="0.5" height="1.1" fill="#606060"/><rect x="379.20" y="56.9" width="0.5" height="1.1" fill="#606060"/><rect x="380.79" y="56.9" width="0.5" height="1.1" fill="#606060"/><rect x="382.39" y="55.6" width="0.5" height="2.6" fill="#8a8a8a"/><rect x="383.98" y="56.9" width="0.5" height="1.1" fill="#606060"/><rect x="385.57" y="56.9" width="0.5" height="1.1" fill="#606060"/><rect x="387.16" y="56.9" width="0.5" height="1.1" fill="#606060"/><rect x="388.75" y="56.9" width="0.5" height="1.1" fill="#606060"/><rect x="390.29" y="52" width="0.6" height="6.2" fill="#5e5e5e"/><rect x="391.93" y="56.9" width="0.5" height="1.1" fill="#606060"/><rect x="393.52" y="56.9" width="0.5" height="1.1" fill="#606060"/><rect x="395.12" y="56.9" width="0.5" height="1.1" fill="#606060"/><rect x="396.71" y="56.9" width="0.5" height="1.1" fill="#606060"/><rect x="398.30" y="55.6" width="0.5" height="2.6" fill="#8a8a8a"/><rect x="399.89" y="56.9" width="0.5" height="1.1" fill="#606060"/><rect x="401.48" y="56.9" width="0.5" height="1.1" fill="#606060"/><rect x="403.07" y="56.9" width="0.5" height="1.1" fill="#606060"/><rect x="404.66" y="56.9" width="0.5" height="1.1" fill="#606060"/><rect x="406.20" y="52" width="0.6" height="6.2" fill="#5e5e5e"/><rect x="407.85" y="56.9" width="0.5" height="1.1" fill="#606060"/><rect x="409.44" y="56.9" width="0.5" height="1.1" fill="#606060"/><rect x="411.03" y="56.9" width="0.5" height="1.1" fill="#606060"/><rect x="412.62" y="56.9" width="0.5" height="1.1" fill="#606060"/><rect x="414.21" y="55.6" width="0.5" height="2.6" fill="#8a8a8a"/><rect x="415.80" y="56.9" width="0.5" height="1.1" fill="#606060"/><rect x="417.39" y="56.9" width="0.5" height="1.1" fill="#606060"/><rect x="418.98" y="56.9" width="0.5" height="1.1" fill="#606060"/><rect x="420.57" y="56.9" width="0.5" height="1.1" fill="#606060"/><rect x="422.12" y="52" width="0.6" height="6.2" fill="#5e5e5e"/><rect x="423.76" y="56.9" width="0.5" height="1.1" fill="#606060"/><rect x="425.35" y="56.9" width="0.5" height="1.1" fill="#606060"/><rect x="426.94" y="56.9" width="0.5" height="1.1" fill="#606060"/><rect x="428.53" y="56.9" width="0.5" height="1.1" fill="#606060"/><rect x="430.12" y="55.6" width="0.5" height="2.6" fill="#8a8a8a"/><rect x="431.71" y="56.9" width="0.5" height="1.1" fill="#606060"/><rect x="433.30" y="56.9" width="0.5" height="1.1" fill="#606060"/><rect x="434.90" y="56.9" width="0.5" height="1.1" fill="#606060"/><rect x="436.49" y="56.9" width="0.5" height="1.1" fill="#606060"/><rect x="438.03" y="52" width="0.6" height="6.2" fill="#5e5e5e"/><rect x="439.67" y="56.9" width="0.5" height="1.1" fill="#606060"/><rect x="441.26" y="56.9" width="0.5" height="1.1" fill="#606060"/><rect x="442.85" y="56.9" width="0.5" height="1.1" fill="#606060"/><rect x="444.44" y="56.9" width="0.5" height="1.1" fill="#606060"/><rect x="446.03" y="55.6" width="0.5" height="2.6" fill="#8a8a8a"/><rect x="447.63" y="56.9" width="0.5" height="1.1" fill="#606060"/><rect x="449.22" y="56.9" width="0.5" height="1.1" fill="#606060"/><rect x="450.81" y="56.9" width="0.5" height="1.1" fill="#606060"/><rect x="452.40" y="56.9" width="0.5" height="1.1" fill="#606060"/><rect x="453.94" y="52" width="0.6" height="6.2" fill="#5e5e5e"/><rect x="455.58" y="56.9" width="0.5" height="1.1" fill="#606060"/><rect x="457.17" y="56.9" width="0.5" height="1.1" fill="#606060"/><rect x="458.76" y="56.9" width="0.5" height="1.1" fill="#606060"/><rect x="460.35" y="56.9" width="0.5" height="1.1" fill="#606060"/><rect x="461.95" y="55.6" width="0.5" height="2.6" fill="#8a8a8a"/><rect x="463.54" y="56.9" width="0.5" height="1.1" fill="#606060"/><rect x="465.13" y="56.9" width="0.5" height="1.1" fill="#606060"/><rect x="466.72" y="56.9" width="0.5" height="1.1" fill="#606060"/><rect x="468.31" y="56.9" width="0.5" height="1.1" fill="#606060"/><rect x="469.85" y="52" width="0.6" height="6.2" fill="#5e5e5e"/><rect x="471.49" y="56.9" width="0.5" height="1.1" fill="#606060"/><rect x="473.08" y="56.9" width="0.5" height="1.1" fill="#606060"/><rect x="474.68" y="56.9" width="0.5" height="1.1" fill="#606060"/><rect x="476.27" y="56.9" width="0.5" height="1.1" fill="#606060"/><rect x="477.86" y="55.6" width="0.5" height="2.6" fill="#8a8a8a"/><rect x="479.45" y="56.9" width="0.5" height="1.1" fill="#606060"/><rect x="481.04" y="56.9" width="0.5" height="1.1" fill="#606060"/><rect x="482.63" y="56.9" width="0.5" height="1.1" fill="#606060"/><rect x="484.22" y="56.9" width="0.5" height="1.1" fill="#606060"/><rect x="485.76" y="52" width="0.6" height="6.2" fill="#5e5e5e"/><rect x="487.41" y="56.9" width="0.5" height="1.1" fill="#606060"/><rect x="489.00" y="56.9" width="0.5" height="1.1" fill="#606060"/><rect x="490.59" y="56.9" width="0.5" height="1.1" fill="#606060"/><rect x="492.18" y="56.9" width="0.5" height="1.1" fill="#606060"/><rect x="493.77" y="55.6" width="0.5" height="2.6" fill="#8a8a8a"/><rect x="495.36" y="56.9" width="0.5" height="1.1" fill="#606060"/><rect x="496.95" y="56.9" width="0.5" height="1.1" fill="#606060"/><rect x="498.54" y="56.9" width="0.5" height="1.1" fill="#606060"/><rect x="500.13" y="56.9" width="0.5" height="1.1" fill="#606060"/><rect x="501.68" y="52" width="0.6" height="6.2" fill="#5e5e5e"/><rect x="503.32" y="56.9" width="0.5" height="1.1" fill="#606060"/><rect x="504.91" y="56.9" width="0.5" height="1.1" fill="#606060"/><rect x="506.50" y="56.9" width="0.5" height="1.1" fill="#606060"/><rect x="508.09" y="56.9" width="0.5" height="1.1" fill="#606060"/><rect x="509.68" y="55.6" width="0.5" height="2.6" fill="#8a8a8a"/><rect x="511.27" y="56.9" width="0.5" height="1.1" fill="#606060"/><rect x="512.86" y="56.9" width="0.5" height="1.1" fill="#606060"/><rect x="514.46" y="56.9" width="0.5" height="1.1" fill="#606060"/><rect x="516.05" y="56.9" width="0.5" height="1.1" fill="#606060"/><rect x="517.59" y="52" width="0.6" height="6.2" fill="#5e5e5e"/><rect x="519.23" y="56.9" width="0.5" height="1.1" fill="#606060"/><rect x="520.82" y="56.9" width="0.5" height="1.1" fill="#606060"/><rect x="522.41" y="56.9" width="0.5" height="1.1" fill="#606060"/><rect x="524.00" y="56.9" width="0.5" height="1.1" fill="#606060"/><rect x="525.59" y="55.6" width="0.5" height="2.6" fill="#8a8a8a"/><rect x="527.19" y="56.9" width="0.5" height="1.1" fill="#606060"/><rect x="528.78" y="56.9" width="0.5" height="1.1" fill="#606060"/><rect x="530.37" y="56.9" width="0.5" height="1.1" fill="#606060"/><rect x="531.96" y="56.9" width="0.5" height="1.1" fill="#606060"/><rect x="533.50" y="52" width="0.6" height="6.2" fill="#5e5e5e"/><rect x="535.14" y="56.9" width="0.5" height="1.1" fill="#606060"/><rect x="536.73" y="56.9" width="0.5" height="1.1" fill="#606060"/><rect x="538.32" y="56.9" width="0.5" height="1.1" fill="#606060"/><rect x="539.91" y="56.9" width="0.5" height="1.1" fill="#606060"/><rect x="541.51" y="55.6" width="0.5" height="2.6" fill="#8a8a8a"/><rect x="543.10" y="56.9" width="0.5" height="1.1" fill="#606060"/><rect x="544.69" y="56.9" width="0.5" height="1.1" fill="#606060"/><rect x="546.28" y="56.9" width="0.5" height="1.1" fill="#606060"/><rect x="547.87" y="56.9" width="0.5" height="1.1" fill="#606060"/><rect x="549.41" y="52" width="0.6" height="6.2" fill="#5e5e5e"/><rect x="551.05" y="56.9" width="0.5" height="1.1" fill="#606060"/><rect x="552.64" y="56.9" width="0.5" height="1.1" fill="#606060"/><rect x="554.24" y="56.9" width="0.5" height="1.1" fill="#606060"/><rect x="555.83" y="56.9" width="0.5" height="1.1" fill="#606060"/><rect x="557.42" y="55.6" width="0.5" height="2.6" fill="#8a8a8a"/><rect x="559.01" y="56.9" width="0.5" height="1.1" fill="#606060"/><rect x="560.60" y="56.9" width="0.5" height="1.1" fill="#606060"/><rect x="562.19" y="56.9" width="0.5" height="1.1" fill="#606060"/><rect x="563.78" y="56.9" width="0.5" height="1.1" fill="#606060"/><rect x="565.32" y="52" width="0.6" height="6.2" fill="#5e5e5e"/><rect x="566.97" y="56.9" width="0.5" height="1.1" fill="#606060"/><rect x="568.56" y="56.9" width="0.5" height="1.1" fill="#606060"/><rect x="570.15" y="56.9" width="0.5" height="1.1" fill="#606060"/><rect x="571.74" y="56.9" width="0.5" height="1.1" fill="#606060"/><rect x="573.33" y="55.6" width="0.5" height="2.6" fill="#8a8a8a"/><rect x="574.92" y="56.9" width="0.5" height="1.1" fill="#606060"/><rect x="576.51" y="56.9" width="0.5" height="1.1" fill="#606060"/><rect x="578.10" y="56.9" width="0.5" height="1.1" fill="#606060"/><rect x="579.69" y="56.9" width="0.5" height="1.1" fill="#606060"/><rect x="581.24" y="52" width="0.6" height="6.2" fill="#5e5e5e"/><rect x="582.88" y="56.9" width="0.5" height="1.1" fill="#606060"/><rect x="584.47" y="56.9" width="0.5" height="1.1" fill="#606060"/><rect x="586.06" y="56.9" width="0.5" height="1.1" fill="#606060"/><rect x="587.65" y="56.9" width="0.5" height="1.1" fill="#606060"/><rect x="589.24" y="55.6" width="0.5" height="2.6" fill="#8a8a8a"/><rect x="590.83" y="56.9" width="0.5" height="1.1" fill="#606060"/><rect x="592.42" y="56.9" width="0.5" height="1.1" fill="#606060"/><rect x="594.02" y="56.9" width="0.5" height="1.1" fill="#606060"/><rect x="595.61" y="56.9" width="0.5" height="1.1" fill="#606060"/><rect x="597.15" y="52" width="0.6" height="6.2" fill="#5e5e5e"/><rect x="598.79" y="56.9" width="0.5" height="1.1" fill="#606060"/><rect x="600.38" y="56.9" width="0.5" height="1.1" fill="#606060"/><rect x="601.97" y="56.9" width="0.5" height="1.1" fill="#606060"/><rect x="603.56" y="56.9" width="0.5" height="1.1" fill="#606060"/><rect x="605.15" y="55.6" width="0.5" height="2.6" fill="#8a8a8a"/><rect x="606.75" y="56.9" width="0.5" height="1.1" fill="#606060"/><rect x="608.34" y="56.9" width="0.5" height="1.1" fill="#606060"/><rect x="609.93" y="56.9" width="0.5" height="1.1" fill="#606060"/><rect x="611.52" y="56.9" width="0.5" height="1.1" fill="#606060"/><rect x="613.06" y="52" width="0.6" height="6.2" fill="#5e5e5e"/><rect x="614.70" y="56.9" width="0.5" height="1.1" fill="#606060"/><rect x="616.29" y="56.9" width="0.5" height="1.1" fill="#606060"/><rect x="617.88" y="56.9" width="0.5" height="1.1" fill="#606060"/><rect x="619.47" y="56.9" width="0.5" height="1.1" fill="#606060"/><rect x="621.07" y="55.6" width="0.5" height="2.6" fill="#8a8a8a"/><rect x="622.66" y="56.9" width="0.5" height="1.1" fill="#606060"/><rect x="624.25" y="56.9" width="0.5" height="1.1" fill="#606060"/><rect x="625.84" y="56.9" width="0.5" height="1.1" fill="#606060"/><rect x="627.43" y="56.9" width="0.5" height="1.1" fill="#606060"/><rect x="628.97" y="52" width="0.6" height="6.2" fill="#5e5e5e"/><rect x="630.61" y="56.9" width="0.5" height="1.1" fill="#606060"/><rect x="632.20" y="56.9" width="0.5" height="1.1" fill="#606060"/><rect x="633.80" y="56.9" width="0.5" height="1.1" fill="#606060"/><rect x="635.39" y="56.9" width="0.5" height="1.1" fill="#606060"/><rect x="636.98" y="55.6" width="0.5" height="2.6" fill="#8a8a8a"/><rect x="638.57" y="56.9" width="0.5" height="1.1" fill="#606060"/><rect x="640.16" y="56.9" width="0.5" height="1.1" fill="#606060"/><rect x="641.75" y="56.9" width="0.5" height="1.1" fill="#606060"/><rect x="643.34" y="56.9" width="0.5" height="1.1" fill="#606060"/><rect x="644.88" y="52" width="0.6" height="6.2" fill="#5e5e5e"/><rect x="646.53" y="56.9" width="0.5" height="1.1" fill="#606060"/><rect x="648.12" y="56.9" width="0.5" height="1.1" fill="#606060"/><rect x="649.71" y="56.9" width="0.5" height="1.1" fill="#606060"/><rect x="651.30" y="56.9" width="0.5" height="1.1" fill="#606060"/><rect x="652.89" y="55.6" width="0.5" height="2.6" fill="#8a8a8a"/><rect x="654.48" y="56.9" width="0.5" height="1.1" fill="#606060"/><rect x="656.07" y="56.9" width="0.5" height="1.1" fill="#606060"/><rect x="657.66" y="56.9" width="0.5" height="1.1" fill="#606060"/><rect x="659.25" y="56.9" width="0.5" height="1.1" fill="#606060"/><rect x="660.80" y="52" width="0.6" height="6.2" fill="#5e5e5e"/><rect x="662.44" y="56.9" width="0.5" height="1.1" fill="#606060"/><rect x="664.03" y="56.9" width="0.5" height="1.1" fill="#606060"/><rect x="665.62" y="56.9" width="0.5" height="1.1" fill="#606060"/><rect x="667.21" y="56.9" width="0.5" height="1.1" fill="#606060"/><rect x="668.80" y="55.6" width="0.5" height="2.6" fill="#8a8a8a"/><rect x="670.39" y="56.9" width="0.5" height="1.1" fill="#606060"/><rect x="671.98" y="56.9" width="0.5" height="1.1" fill="#606060"/><rect x="673.58" y="56.9" width="0.5" height="1.1" fill="#606060"/><rect x="675.17" y="56.9" width="0.5" height="1.1" fill="#606060"/><rect x="676.71" y="52" width="0.6" height="6.2" fill="#5e5e5e"/><rect x="678.35" y="56.9" width="0.5" height="1.1" fill="#606060"/><rect x="679.94" y="56.9" width="0.5" height="1.1" fill="#606060"/><rect x="681.53" y="56.9" width="0.5" height="1.1" fill="#606060"/><rect x="683.12" y="56.9" width="0.5" height="1.1" fill="#606060"/><rect x="684.71" y="55.6" width="0.5" height="2.6" fill="#8a8a8a"/><rect x="686.31" y="56.9" width="0.5" height="1.1" fill="#606060"/><rect x="687.90" y="56.9" width="0.5" height="1.1" fill="#606060"/><rect x="689.49" y="56.9" width="0.5" height="1.1" fill="#606060"/><rect x="691.08" y="56.9" width="0.5" height="1.1" fill="#606060"/><rect x="692.62" y="52" width="0.6" height="6.2" fill="#5e5e5e"/><rect x="694.26" y="56.9" width="0.5" height="1.1" fill="#606060"/><rect x="695.85" y="56.9" width="0.5" height="1.1" fill="#606060"/><rect x="697.44" y="56.9" width="0.5" height="1.1" fill="#606060"/><rect x="699.03" y="56.9" width="0.5" height="1.1" fill="#606060"/><rect x="700.63" y="55.6" width="0.5" height="2.6" fill="#8a8a8a"/><rect x="702.22" y="56.9" width="0.5" height="1.1" fill="#606060"/><rect x="703.81" y="56.9" width="0.5" height="1.1" fill="#606060"/><rect x="705.40" y="56.9" width="0.5" height="1.1" fill="#606060"/><rect x="706.99" y="56.9" width="0.5" height="1.1" fill="#606060"/><rect x="708.53" y="52" width="0.6" height="6.2" fill="#5e5e5e"/><rect x="710.17" y="56.9" width="0.5" height="1.1" fill="#606060"/><rect x="711.76" y="56.9" width="0.5" height="1.1" fill="#606060"/><rect x="713.36" y="56.9" width="0.5" height="1.1" fill="#606060"/><rect x="714.95" y="56.9" width="0.5" height="1.1" fill="#606060"/><rect x="716.54" y="55.6" width="0.5" height="2.6" fill="#8a8a8a"/><rect x="718.13" y="56.9" width="0.5" height="1.1" fill="#606060"/><rect x="719.72" y="56.9" width="0.5" height="1.1" fill="#606060"/><rect x="721.31" y="56.9" width="0.5" height="1.1" fill="#606060"/><rect x="722.90" y="56.9" width="0.5" height="1.1" fill="#606060"/><rect x="724.44" y="52" width="0.6" height="6.2" fill="#5e5e5e"/><rect x="726.09" y="56.9" width="0.5" height="1.1" fill="#606060"/><rect x="727.68" y="56.9" width="0.5" height="1.1" fill="#606060"/><rect x="729.27" y="56.9" width="0.5" height="1.1" fill="#606060"/><rect x="730.86" y="56.9" width="0.5" height="1.1" fill="#606060"/><rect x="732.45" y="55.6" width="0.5" height="2.6" fill="#8a8a8a"/><rect x="734.04" y="56.9" width="0.5" height="1.1" fill="#606060"/><rect x="735.63" y="56.9" width="0.5" height="1.1" fill="#606060"/><rect x="737.22" y="56.9" width="0.5" height="1.1" fill="#606060"/><rect x="738.81" y="56.9" width="0.5" height="1.1" fill="#606060"/><rect x="23.9" y="58.44" width="1.1" height="0.5" fill="#606060"/><rect x="19" y="59.97" width="6.2" height="0.6" fill="#6a6a6a"/><rect x="23.9" y="61.61" width="1.1" height="0.5" fill="#606060"/><rect x="23.9" y="63.19" width="1.1" height="0.5" fill="#606060"/><rect x="23.9" y="64.77" width="1.1" height="0.5" fill="#606060"/><rect x="23.9" y="66.35" width="1.1" height="0.5" fill="#606060"/><rect x="22.6" y="67.94" width="2.6" height="0.5" fill="#8a8a8a"/><rect x="23.9" y="69.52" width="1.1" height="0.5" fill="#606060"/><rect x="23.9" y="71.10" width="1.1" height="0.5" fill="#606060"/><rect x="23.9" y="72.68" width="1.1" height="0.5" fill="#606060"/><rect x="23.9" y="74.27" width="1.1" height="0.5" fill="#606060"/><rect x="19" y="75.80" width="6.2" height="0.6" fill="#6a6a6a"/><rect x="23.9" y="77.43" width="1.1" height="0.5" fill="#606060"/><rect x="23.9" y="79.02" width="1.1" height="0.5" fill="#606060"/><rect x="23.9" y="80.60" width="1.1" height="0.5" fill="#606060"/><rect x="23.9" y="82.18" width="1.1" height="0.5" fill="#606060"/><rect x="22.6" y="83.76" width="2.6" height="0.5" fill="#8a8a8a"/><rect x="23.9" y="85.34" width="1.1" height="0.5" fill="#606060"/><rect x="23.9" y="86.93" width="1.1" height="0.5" fill="#606060"/><rect x="23.9" y="88.51" width="1.1" height="0.5" fill="#606060"/><rect x="23.9" y="90.09" width="1.1" height="0.5" fill="#606060"/><rect x="19" y="91.62" width="6.2" height="0.6" fill="#6a6a6a"/><rect x="23.9" y="93.26" width="1.1" height="0.5" fill="#606060"/><rect x="23.9" y="94.84" width="1.1" height="0.5" fill="#606060"/><rect x="23.9" y="96.42" width="1.1" height="0.5" fill="#606060"/><rect x="23.9" y="98.00" width="1.1" height="0.5" fill="#606060"/><rect x="22.6" y="99.59" width="2.6" height="0.5" fill="#8a8a8a"/><rect x="23.9" y="101.17" width="1.1" height="0.5" fill="#606060"/><rect x="23.9" y="102.75" width="1.1" height="0.5" fill="#606060"/><rect x="23.9" y="104.33" width="1.1" height="0.5" fill="#606060"/><rect x="23.9" y="105.92" width="1.1" height="0.5" fill="#606060"/><rect x="19" y="107.45" width="6.2" height="0.6" fill="#6a6a6a"/><rect x="23.9" y="109.08" width="1.1" height="0.5" fill="#606060"/><rect x="23.9" y="110.66" width="1.1" height="0.5" fill="#606060"/><rect x="23.9" y="112.25" width="1.1" height="0.5" fill="#606060"/><rect x="23.9" y="113.83" width="1.1" height="0.5" fill="#606060"/><rect x="22.6" y="115.41" width="2.6" height="0.5" fill="#8a8a8a"/><rect x="23.9" y="117.00" width="1.1" height="0.5" fill="#606060"/><rect x="23.9" y="118.58" width="1.1" height="0.5" fill="#606060"/><rect x="23.9" y="120.16" width="1.1" height="0.5" fill="#606060"/><rect x="23.9" y="121.74" width="1.1" height="0.5" fill="#606060"/><rect x="19" y="123.27" width="6.2" height="0.6" fill="#6a6a6a"/><rect x="23.9" y="124.91" width="1.1" height="0.5" fill="#606060"/><rect x="23.9" y="126.49" width="1.1" height="0.5" fill="#606060"/><rect x="23.9" y="128.07" width="1.1" height="0.5" fill="#606060"/><rect x="23.9" y="129.66" width="1.1" height="0.5" fill="#606060"/><rect x="22.6" y="131.24" width="2.6" height="0.5" fill="#8a8a8a"/><rect x="23.9" y="132.82" width="1.1" height="0.5" fill="#606060"/><rect x="23.9" y="134.40" width="1.1" height="0.5" fill="#606060"/><rect x="23.9" y="135.98" width="1.1" height="0.5" fill="#606060"/><rect x="23.9" y="137.57" width="1.1" height="0.5" fill="#606060"/><rect x="19" y="139.10" width="6.2" height="0.6" fill="#6a6a6a"/><rect x="23.9" y="140.73" width="1.1" height="0.5" fill="#606060"/><rect x="23.9" y="142.31" width="1.1" height="0.5" fill="#606060"/><rect x="23.9" y="143.90" width="1.1" height="0.5" fill="#606060"/><rect x="23.9" y="145.48" width="1.1" height="0.5" fill="#606060"/><rect x="22.6" y="147.06" width="2.6" height="0.5" fill="#8a8a8a"/><rect x="23.9" y="148.64" width="1.1" height="0.5" fill="#606060"/><rect x="23.9" y="150.23" width="1.1" height="0.5" fill="#606060"/><rect x="23.9" y="151.81" width="1.1" height="0.5" fill="#606060"/><rect x="23.9" y="153.39" width="1.1" height="0.5" fill="#606060"/><rect x="19" y="154.92" width="6.2" height="0.6" fill="#6a6a6a"/><rect x="23.9" y="156.56" width="1.1" height="0.5" fill="#606060"/><rect x="23.9" y="158.14" width="1.1" height="0.5" fill="#606060"/><rect x="23.9" y="159.72" width="1.1" height="0.5" fill="#606060"/><rect x="23.9" y="161.31" width="1.1" height="0.5" fill="#606060"/><rect x="22.6" y="162.89" width="2.6" height="0.5" fill="#8a8a8a"/><rect x="23.9" y="164.47" width="1.1" height="0.5" fill="#606060"/><rect x="23.9" y="166.05" width="1.1" height="0.5" fill="#606060"/><rect x="23.9" y="167.63" width="1.1" height="0.5" fill="#606060"/><rect x="23.9" y="169.22" width="1.1" height="0.5" fill="#606060"/><rect x="19" y="170.75" width="6.2" height="0.6" fill="#6a6a6a"/><rect x="23.9" y="172.38" width="1.1" height="0.5" fill="#606060"/><rect x="23.9" y="173.96" width="1.1" height="0.5" fill="#606060"/><rect x="23.9" y="175.55" width="1.1" height="0.5" fill="#606060"/><rect x="23.9" y="177.13" width="1.1" height="0.5" fill="#606060"/><rect x="22.6" y="178.71" width="2.6" height="0.5" fill="#8a8a8a"/><rect x="23.9" y="180.30" width="1.1" height="0.5" fill="#606060"/><rect x="23.9" y="181.88" width="1.1" height="0.5" fill="#606060"/><rect x="23.9" y="183.46" width="1.1" height="0.5" fill="#606060"/><rect x="23.9" y="185.04" width="1.1" height="0.5" fill="#606060"/><rect x="19" y="186.57" width="6.2" height="0.6" fill="#6a6a6a"/><rect x="23.9" y="188.21" width="1.1" height="0.5" fill="#606060"/><rect x="23.9" y="189.79" width="1.1" height="0.5" fill="#606060"/><rect x="23.9" y="191.37" width="1.1" height="0.5" fill="#606060"/><rect x="23.9" y="192.95" width="1.1" height="0.5" fill="#606060"/><rect x="22.6" y="194.54" width="2.6" height="0.5" fill="#8a8a8a"/><rect x="23.9" y="196.12" width="1.1" height="0.5" fill="#606060"/><rect x="23.9" y="197.70" width="1.1" height="0.5" fill="#606060"/><rect x="23.9" y="199.28" width="1.1" height="0.5" fill="#606060"/><rect x="23.9" y="200.87" width="1.1" height="0.5" fill="#606060"/><rect x="19" y="202.40" width="6.2" height="0.6" fill="#6a6a6a"/><rect x="23.9" y="204.03" width="1.1" height="0.5" fill="#606060"/><rect x="23.9" y="205.62" width="1.1" height="0.5" fill="#606060"/><rect x="23.9" y="207.20" width="1.1" height="0.5" fill="#606060"/><rect x="23.9" y="208.78" width="1.1" height="0.5" fill="#606060"/><rect x="22.6" y="210.36" width="2.6" height="0.5" fill="#8a8a8a"/><rect x="23.9" y="211.94" width="1.1" height="0.5" fill="#606060"/><rect x="23.9" y="213.53" width="1.1" height="0.5" fill="#606060"/><rect x="23.9" y="215.11" width="1.1" height="0.5" fill="#606060"/><rect x="23.9" y="216.69" width="1.1" height="0.5" fill="#606060"/><rect x="19" y="218.22" width="6.2" height="0.6" fill="#6a6a6a"/><rect x="23.9" y="219.86" width="1.1" height="0.5" fill="#606060"/><rect x="23.9" y="221.44" width="1.1" height="0.5" fill="#606060"/><rect x="23.9" y="223.02" width="1.1" height="0.5" fill="#606060"/><rect x="23.9" y="224.60" width="1.1" height="0.5" fill="#606060"/><rect x="22.6" y="226.19" width="2.6" height="0.5" fill="#8a8a8a"/><rect x="23.9" y="227.77" width="1.1" height="0.5" fill="#606060"/><rect x="23.9" y="229.35" width="1.1" height="0.5" fill="#606060"/><rect x="23.9" y="230.94" width="1.1" height="0.5" fill="#606060"/><rect x="23.9" y="232.52" width="1.1" height="0.5" fill="#606060"/><rect x="19" y="234.05" width="6.2" height="0.6" fill="#6a6a6a"/><rect x="23.9" y="235.68" width="1.1" height="0.5" fill="#606060"/><rect x="23.9" y="237.26" width="1.1" height="0.5" fill="#606060"/><rect x="23.9" y="238.85" width="1.1" height="0.5" fill="#606060"/><rect x="23.9" y="240.43" width="1.1" height="0.5" fill="#606060"/><rect x="22.6" y="242.01" width="2.6" height="0.5" fill="#8a8a8a"/><rect x="23.9" y="243.59" width="1.1" height="0.5" fill="#606060"/><rect x="23.9" y="245.18" width="1.1" height="0.5" fill="#606060"/><rect x="23.9" y="246.76" width="1.1" height="0.5" fill="#606060"/><rect x="23.9" y="248.34" width="1.1" height="0.5" fill="#606060"/><rect x="19" y="249.87" width="6.2" height="0.6" fill="#6a6a6a"/><rect x="23.9" y="251.51" width="1.1" height="0.5" fill="#606060"/><rect x="23.9" y="253.09" width="1.1" height="0.5" fill="#606060"/><rect x="23.9" y="254.67" width="1.1" height="0.5" fill="#606060"/><rect x="23.9" y="256.25" width="1.1" height="0.5" fill="#606060"/><rect x="22.6" y="257.84" width="2.6" height="0.5" fill="#8a8a8a"/><rect x="23.9" y="259.42" width="1.1" height="0.5" fill="#606060"/><rect x="23.9" y="261.00" width="1.1" height="0.5" fill="#606060"/><rect x="23.9" y="262.59" width="1.1" height="0.5" fill="#606060"/><rect x="23.9" y="264.17" width="1.1" height="0.5" fill="#606060"/><rect x="19" y="265.70" width="6.2" height="0.6" fill="#6a6a6a"/><rect x="23.9" y="267.33" width="1.1" height="0.5" fill="#606060"/><rect x="23.9" y="268.91" width="1.1" height="0.5" fill="#606060"/><rect x="23.9" y="270.50" width="1.1" height="0.5" fill="#606060"/><rect x="23.9" y="272.08" width="1.1" height="0.5" fill="#606060"/><rect x="22.6" y="273.66" width="2.6" height="0.5" fill="#8a8a8a"/><rect x="23.9" y="275.25" width="1.1" height="0.5" fill="#606060"/><rect x="23.9" y="276.83" width="1.1" height="0.5" fill="#606060"/><rect x="23.9" y="278.41" width="1.1" height="0.5" fill="#606060"/><rect x="23.9" y="279.99" width="1.1" height="0.5" fill="#606060"/><rect x="19" y="281.52" width="6.2" height="0.6" fill="#6a6a6a"/><rect x="23.9" y="283.16" width="1.1" height="0.5" fill="#606060"/><rect x="23.9" y="284.74" width="1.1" height="0.5" fill="#606060"/><rect x="23.9" y="286.32" width="1.1" height="0.5" fill="#606060"/><rect x="23.9" y="287.90" width="1.1" height="0.5" fill="#606060"/><rect x="22.6" y="289.49" width="2.6" height="0.5" fill="#8a8a8a"/><rect x="23.9" y="291.07" width="1.1" height="0.5" fill="#606060"/><rect x="23.9" y="292.65" width="1.1" height="0.5" fill="#606060"/><rect x="23.9" y="294.24" width="1.1" height="0.5" fill="#606060"/><rect x="23.9" y="295.82" width="1.1" height="0.5" fill="#606060"/><rect x="19" y="297.35" width="6.2" height="0.6" fill="#6a6a6a"/><rect x="23.9" y="298.98" width="1.1" height="0.5" fill="#606060"/><rect x="23.9" y="300.56" width="1.1" height="0.5" fill="#606060"/><rect x="23.9" y="302.15" width="1.1" height="0.5" fill="#606060"/><rect x="23.9" y="303.73" width="1.1" height="0.5" fill="#606060"/><rect x="22.6" y="305.31" width="2.6" height="0.5" fill="#8a8a8a"/><rect x="23.9" y="306.89" width="1.1" height="0.5" fill="#606060"/><rect x="23.9" y="308.48" width="1.1" height="0.5" fill="#606060"/><rect x="23.9" y="310.06" width="1.1" height="0.5" fill="#606060"/><rect x="23.9" y="311.64" width="1.1" height="0.5" fill="#606060"/><rect x="19" y="313.18" width="6.2" height="0.6" fill="#6a6a6a"/><rect x="23.9" y="314.81" width="1.1" height="0.5" fill="#606060"/><rect x="23.9" y="316.39" width="1.1" height="0.5" fill="#606060"/><rect x="23.9" y="317.97" width="1.1" height="0.5" fill="#606060"/><rect x="23.9" y="319.56" width="1.1" height="0.5" fill="#606060"/><rect x="22.6" y="321.14" width="2.6" height="0.5" fill="#8a8a8a"/><rect x="23.9" y="322.72" width="1.1" height="0.5" fill="#606060"/><rect x="23.9" y="324.30" width="1.1" height="0.5" fill="#606060"/><rect x="23.9" y="325.88" width="1.1" height="0.5" fill="#606060"/><rect x="23.9" y="327.47" width="1.1" height="0.5" fill="#606060"/><rect x="19" y="329.00" width="6.2" height="0.6" fill="#6a6a6a"/><rect x="23.9" y="330.63" width="1.1" height="0.5" fill="#606060"/><rect x="23.9" y="332.22" width="1.1" height="0.5" fill="#606060"/><rect x="23.9" y="333.80" width="1.1" height="0.5" fill="#606060"/><rect x="23.9" y="335.38" width="1.1" height="0.5" fill="#606060"/><rect x="22.6" y="336.96" width="2.6" height="0.5" fill="#8a8a8a"/><rect x="23.9" y="338.54" width="1.1" height="0.5" fill="#606060"/><rect x="23.9" y="340.13" width="1.1" height="0.5" fill="#606060"/><rect x="23.9" y="341.71" width="1.1" height="0.5" fill="#606060"/><rect x="23.9" y="343.29" width="1.1" height="0.5" fill="#606060"/><rect x="19" y="344.82" width="6.2" height="0.6" fill="#6a6a6a"/><rect x="23.9" y="346.46" width="1.1" height="0.5" fill="#606060"/><rect x="23.9" y="348.04" width="1.1" height="0.5" fill="#606060"/><rect x="23.9" y="349.62" width="1.1" height="0.5" fill="#606060"/><rect x="23.9" y="351.21" width="1.1" height="0.5" fill="#606060"/><rect x="22.6" y="352.79" width="2.6" height="0.5" fill="#8a8a8a"/><rect x="23.9" y="354.37" width="1.1" height="0.5" fill="#606060"/><rect x="23.9" y="355.95" width="1.1" height="0.5" fill="#606060"/><rect x="23.9" y="357.53" width="1.1" height="0.5" fill="#606060"/><rect x="23.9" y="359.12" width="1.1" height="0.5" fill="#606060"/><rect x="19" y="360.65" width="6.2" height="0.6" fill="#6a6a6a"/><rect x="23.9" y="362.28" width="1.1" height="0.5" fill="#606060"/><rect x="23.9" y="363.87" width="1.1" height="0.5" fill="#606060"/><rect x="23.9" y="365.45" width="1.1" height="0.5" fill="#606060"/><rect x="23.9" y="367.03" width="1.1" height="0.5" fill="#606060"/><rect x="22.6" y="368.61" width="2.6" height="0.5" fill="#8a8a8a"/><rect x="23.9" y="370.20" width="1.1" height="0.5" fill="#606060"/><rect x="23.9" y="371.78" width="1.1" height="0.5" fill="#606060"/><rect x="23.9" y="373.36" width="1.1" height="0.5" fill="#606060"/><rect x="23.9" y="374.94" width="1.1" height="0.5" fill="#606060"/><rect x="19" y="376.47" width="6.2" height="0.6" fill="#6a6a6a"/><rect x="23.9" y="378.11" width="1.1" height="0.5" fill="#606060"/><rect x="23.9" y="379.69" width="1.1" height="0.5" fill="#606060"/><rect x="23.9" y="381.27" width="1.1" height="0.5" fill="#606060"/><rect x="23.9" y="382.86" width="1.1" height="0.5" fill="#606060"/><rect x="22.6" y="384.44" width="2.6" height="0.5" fill="#8a8a8a"/><rect x="23.9" y="386.02" width="1.1" height="0.5" fill="#606060"/><rect x="23.9" y="387.60" width="1.1" height="0.5" fill="#606060"/><rect x="23.9" y="389.18" width="1.1" height="0.5" fill="#606060"/><rect x="23.9" y="390.77" width="1.1" height="0.5" fill="#606060"/><rect x="19" y="392.30" width="6.2" height="0.6" fill="#6a6a6a"/><rect x="23.9" y="393.93" width="1.1" height="0.5" fill="#606060"/><rect x="23.9" y="395.51" width="1.1" height="0.5" fill="#606060"/><rect x="23.9" y="397.10" width="1.1" height="0.5" fill="#606060"/><rect x="23.9" y="398.68" width="1.1" height="0.5" fill="#606060"/><rect x="22.6" y="400.26" width="2.6" height="0.5" fill="#8a8a8a"/><rect x="23.9" y="401.85" width="1.1" height="0.5" fill="#606060"/><rect x="23.9" y="403.43" width="1.1" height="0.5" fill="#606060"/><rect x="23.9" y="405.01" width="1.1" height="0.5" fill="#606060"/><rect x="23.9" y="406.59" width="1.1" height="0.5" fill="#606060"/><rect x="19" y="408.12" width="6.2" height="0.6" fill="#6a6a6a"/><rect x="23.9" y="409.76" width="1.1" height="0.5" fill="#606060"/><rect x="23.9" y="411.34" width="1.1" height="0.5" fill="#606060"/><rect x="23.9" y="412.92" width="1.1" height="0.5" fill="#606060"/><rect x="23.9" y="414.50" width="1.1" height="0.5" fill="#606060"/><rect x="22.6" y="416.09" width="2.6" height="0.5" fill="#8a8a8a"/><rect x="23.9" y="417.67" width="1.1" height="0.5" fill="#606060"/><rect x="23.9" y="419.25" width="1.1" height="0.5" fill="#606060"/><rect x="23.9" y="420.84" width="1.1" height="0.5" fill="#606060"/><rect x="23.9" y="422.42" width="1.1" height="0.5" fill="#606060"/><rect x="19" y="423.95" width="6.2" height="0.6" fill="#6a6a6a"/><rect x="23.9" y="425.58" width="1.1" height="0.5" fill="#606060"/><rect x="23.9" y="427.16" width="1.1" height="0.5" fill="#606060"/><rect x="23.9" y="428.75" width="1.1" height="0.5" fill="#606060"/><rect x="23.9" y="430.33" width="1.1" height="0.5" fill="#606060"/><rect x="22.6" y="431.91" width="2.6" height="0.5" fill="#8a8a8a"/><rect x="23.9" y="433.50" width="1.1" height="0.5" fill="#606060"/><rect x="23.9" y="435.08" width="1.1" height="0.5" fill="#606060"/><rect x="23.9" y="436.66" width="1.1" height="0.5" fill="#606060"/><g fill="#777"><rect x="19.5" y="55" width="5.4" height="0.5"/><rect x="22" y="52.4" width="0.5" height="5.4"/></g></svg>
<div class="a" style="left:19px;top:58.2px;width:6.2px;height:0.4px;background:#6e6e6e;"></div>
<div class="a t" style="left:25.72px;top:53.145px;font:normal 16.800px/16.800px 'Liberation Sans';color:#f4f4f4;transform:scale(0.2500,0.2500);transform-origin:0 0;">70</div>
<div class="a t" style="left:41.63px;top:53.145px;font:normal 16.800px/16.800px 'Liberation Sans';color:#f4f4f4;transform:scale(0.2500,0.2500);transform-origin:0 0;">60</div>
<div class="a t" style="left:57.54px;top:53.145px;font:normal 16.800px/16.800px 'Liberation Sans';color:#f4f4f4;transform:scale(0.2500,0.2500);transform-origin:0 0;">50</div>
<div class="a t" style="left:73.45px;top:53.145px;font:normal 16.800px/16.800px 'Liberation Sans';color:#f4f4f4;transform:scale(0.2500,0.2500);transform-origin:0 0;">40</div>
<div class="a t" style="left:89.36px;top:53.145px;font:normal 16.800px/16.800px 'Liberation Sans';color:#f4f4f4;transform:scale(0.2500,0.2500);transform-origin:0 0;">30</div>
<div class="a t" style="left:105.28px;top:53.145px;font:normal 16.800px/16.800px 'Liberation Sans';color:#f4f4f4;transform:scale(0.2500,0.2500);transform-origin:0 0;">20</div>
<div class="a t" style="left:121.19px;top:53.145px;font:normal 16.800px/16.800px 'Liberation Sans';color:#f4f4f4;transform:scale(0.2500,0.2500);transform-origin:0 0;">10</div>
<div class="a t" style="left:137.1px;top:53.145px;font:normal 16.800px/16.800px 'Liberation Sans';color:#f4f4f4;transform:scale(0.2500,0.2500);transform-origin:0 0;">0</div>
<div class="a t" style="left:153.01px;top:53.145px;font:normal 16.800px/16.800px 'Liberation Sans';color:#f4f4f4;transform:scale(0.2500,0.2500);transform-origin:0 0;">10</div>
<div class="a t" style="left:168.92px;top:53.145px;font:normal 16.800px/16.800px 'Liberation Sans';color:#f4f4f4;transform:scale(0.2500,0.2500);transform-origin:0 0;">20</div>
<div class="a t" style="left:184.84px;top:53.145px;font:normal 16.800px/16.800px 'Liberation Sans';color:#f4f4f4;transform:scale(0.2500,0.2500);transform-origin:0 0;">30</div>
<div class="a t" style="left:200.75px;top:53.145px;font:normal 16.800px/16.800px 'Liberation Sans';color:#f4f4f4;transform:scale(0.2500,0.2500);transform-origin:0 0;">40</div>
<div class="a t" style="left:216.66px;top:53.145px;font:normal 16.800px/16.800px 'Liberation Sans';color:#f4f4f4;transform:scale(0.2500,0.2500);transform-origin:0 0;">50</div>
<div class="a t" style="left:232.57px;top:53.145px;font:normal 16.800px/16.800px 'Liberation Sans';color:#f4f4f4;transform:scale(0.2500,0.2500);transform-origin:0 0;">60</div>
<div class="a t" style="left:248.48px;top:53.145px;font:normal 16.800px/16.800px 'Liberation Sans';color:#f4f4f4;transform:scale(0.2500,0.2500);transform-origin:0 0;">70</div>
<div class="a t" style="left:264.4px;top:53.145px;font:normal 16.800px/16.800px 'Liberation Sans';color:#f4f4f4;transform:scale(0.2500,0.2500);transform-origin:0 0;">80</div>
<div class="a t" style="left:280.31px;top:53.145px;font:normal 16.800px/16.800px 'Liberation Sans';color:#f4f4f4;transform:scale(0.2500,0.2500);transform-origin:0 0;">90</div>
<div class="a t" style="left:296.22px;top:53.145px;font:normal 16.800px/16.800px 'Liberation Sans';color:#f4f4f4;transform:scale(0.2500,0.2500);transform-origin:0 0;">100</div>
<div class="a t" style="left:312.13px;top:53.145px;font:normal 16.800px/16.800px 'Liberation Sans';color:#f4f4f4;transform:scale(0.2500,0.2500);transform-origin:0 0;">110</div>
<div class="a t" style="left:328.04px;top:53.145px;font:normal 16.800px/16.800px 'Liberation Sans';color:#f4f4f4;transform:scale(0.2500,0.2500);transform-origin:0 0;">120</div>
<div class="a t" style="left:343.96px;top:53.145px;font:normal 16.800px/16.800px 'Liberation Sans';color:#f4f4f4;transform:scale(0.2500,0.2500);transform-origin:0 0;">130</div>
<div class="a t" style="left:359.87px;top:53.145px;font:normal 16.800px/16.800px 'Liberation Sans';color:#f4f4f4;transform:scale(0.2500,0.2500);transform-origin:0 0;">140</div>
<div class="a t" style="left:375.78px;top:53.145px;font:normal 16.800px/16.800px 'Liberation Sans';color:#f4f4f4;transform:scale(0.2500,0.2500);transform-origin:0 0;">150</div>
<div class="a t" style="left:391.69px;top:53.145px;font:normal 16.800px/16.800px 'Liberation Sans';color:#f4f4f4;transform:scale(0.2500,0.2500);transform-origin:0 0;">160</div>
<div class="a t" style="left:407.6px;top:53.145px;font:normal 16.800px/16.800px 'Liberation Sans';color:#f4f4f4;transform:scale(0.2500,0.2500);transform-origin:0 0;">170</div>
<div class="a t" style="left:423.52px;top:53.145px;font:normal 16.800px/16.800px 'Liberation Sans';color:#f4f4f4;transform:scale(0.2500,0.2500);transform-origin:0 0;">180</div>
<div class="a t" style="left:439.43px;top:53.145px;font:normal 16.800px/16.800px 'Liberation Sans';color:#f4f4f4;transform:scale(0.2500,0.2500);transform-origin:0 0;">190</div>
<div class="a t" style="left:455.34px;top:53.145px;font:normal 16.800px/16.800px 'Liberation Sans';color:#f4f4f4;transform:scale(0.2500,0.2500);transform-origin:0 0;">200</div>
<div class="a t" style="left:471.25px;top:53.145px;font:normal 16.800px/16.800px 'Liberation Sans';color:#f4f4f4;transform:scale(0.2500,0.2500);transform-origin:0 0;">210</div>
<div class="a t" style="left:487.16px;top:53.145px;font:normal 16.800px/16.800px 'Liberation Sans';color:#f4f4f4;transform:scale(0.2500,0.2500);transform-origin:0 0;">220</div>
<div class="a t" style="left:503.08px;top:53.145px;font:normal 16.800px/16.800px 'Liberation Sans';color:#f4f4f4;transform:scale(0.2500,0.2500);transform-origin:0 0;">230</div>
<div class="a t" style="left:518.99px;top:53.145px;font:normal 16.800px/16.800px 'Liberation Sans';color:#f4f4f4;transform:scale(0.2500,0.2500);transform-origin:0 0;">240</div>
<div class="a t" style="left:534.9px;top:53.145px;font:normal 16.800px/16.800px 'Liberation Sans';color:#f4f4f4;transform:scale(0.2500,0.2500);transform-origin:0 0;">250</div>
<div class="a t" style="left:550.81px;top:53.145px;font:normal 16.800px/16.800px 'Liberation Sans';color:#f4f4f4;transform:scale(0.2500,0.2500);transform-origin:0 0;">260</div>
<div class="a t" style="left:566.72px;top:53.145px;font:normal 16.800px/16.800px 'Liberation Sans';color:#f4f4f4;transform:scale(0.2500,0.2500);transform-origin:0 0;">270</div>
<div class="a t" style="left:582.64px;top:53.145px;font:normal 16.800px/16.800px 'Liberation Sans';color:#f4f4f4;transform:scale(0.2500,0.2500);transform-origin:0 0;">280</div>
<div class="a t" style="left:598.55px;top:53.145px;font:normal 16.800px/16.800px 'Liberation Sans';color:#f4f4f4;transform:scale(0.2500,0.2500);transform-origin:0 0;">290</div>
<div class="a t" style="left:614.46px;top:53.145px;font:normal 16.800px/16.800px 'Liberation Sans';color:#f4f4f4;transform:scale(0.2500,0.2500);transform-origin:0 0;">300</div>
<div class="a t" style="left:630.37px;top:53.145px;font:normal 16.800px/16.800px 'Liberation Sans';color:#f4f4f4;transform:scale(0.2500,0.2500);transform-origin:0 0;">310</div>
<div class="a t" style="left:646.28px;top:53.145px;font:normal 16.800px/16.800px 'Liberation Sans';color:#f4f4f4;transform:scale(0.2500,0.2500);transform-origin:0 0;">320</div>
<div class="a t" style="left:662.2px;top:53.145px;font:normal 16.800px/16.800px 'Liberation Sans';color:#f4f4f4;transform:scale(0.2500,0.2500);transform-origin:0 0;">330</div>
<div class="a t" style="left:678.11px;top:53.145px;font:normal 16.800px/16.800px 'Liberation Sans';color:#f4f4f4;transform:scale(0.2500,0.2500);transform-origin:0 0;">340</div>
<div class="a t" style="left:694.02px;top:53.145px;font:normal 16.800px/16.800px 'Liberation Sans';color:#f4f4f4;transform:scale(0.2500,0.2500);transform-origin:0 0;">350</div>
<div class="a t" style="left:709.93px;top:53.145px;font:normal 16.800px/16.800px 'Liberation Sans';color:#f4f4f4;transform:scale(0.2500,0.2500);transform-origin:0 0;">360</div>
<div class="a t" style="left:725.84px;top:53.145px;font:normal 16.800px/16.800px 'Liberation Sans';color:#f4f4f4;transform:scale(0.2500,0.2500);transform-origin:0 0;">370</div>
<div class="a t" style="left:20.6px;top:61.176px;font:bold 18.400px/18.400px 'Liberation Sans';color:#ffffff;transform:scale(0.2500,0.2500);transform-origin:0 0;">1</div>
<div class="a t" style="left:20.6px;top:65.076px;font:bold 18.400px/18.400px 'Liberation Sans';color:#ffffff;transform:scale(0.2500,0.2500);transform-origin:0 0;">0</div>
<div class="a t" style="left:20.6px;top:77.006px;font:bold 18.400px/18.400px 'Liberation Sans';color:#ffffff;transform:scale(0.2500,0.2500);transform-origin:0 0;">0</div>
<div class="a t" style="left:20.6px;top:92.826px;font:bold 18.400px/18.400px 'Liberation Sans';color:#ffffff;transform:scale(0.2500,0.2500);transform-origin:0 0;">1</div>
<div class="a t" style="left:20.6px;top:96.726px;font:bold 18.400px/18.400px 'Liberation Sans';color:#ffffff;transform:scale(0.2500,0.2500);transform-origin:0 0;">0</div>
<div class="a t" style="left:20.6px;top:108.656px;font:bold 18.400px/18.400px 'Liberation Sans';color:#ffffff;transform:scale(0.2500,0.2500);transform-origin:0 0;">2</div>
<div class="a t" style="left:20.6px;top:112.556px;font:bold 18.400px/18.400px 'Liberation Sans';color:#ffffff;transform:scale(0.2500,0.2500);transform-origin:0 0;">0</div>
<div class="a t" style="left:20.6px;top:124.486px;font:bold 18.400px/18.400px 'Liberation Sans';color:#ffffff;transform:scale(0.2500,0.2500);transform-origin:0 0;">3</div>
<div class="a t" style="left:20.6px;top:128.386px;font:bold 18.400px/18.400px 'Liberation Sans';color:#ffffff;transform:scale(0.2500,0.2500);transform-origin:0 0;">0</div>
<div class="a t" style="left:20.6px;top:140.306px;font:bold 18.400px/18.400px 'Liberation Sans';color:#ffffff;transform:scale(0.2500,0.2500);transform-origin:0 0;">4</div>
<div class="a t" style="left:20.6px;top:144.206px;font:bold 18.400px/18.400px 'Liberation Sans';color:#ffffff;transform:scale(0.2500,0.2500);transform-origin:0 0;">0</div>
<div class="a t" style="left:20.6px;top:156.136px;font:bold 18.400px/18.400px 'Liberation Sans';color:#ffffff;transform:scale(0.2500,0.2500);transform-origin:0 0;">5</div>
<div class="a t" style="left:20.6px;top:160.036px;font:bold 18.400px/18.400px 'Liberation Sans';color:#ffffff;transform:scale(0.2500,0.2500);transform-origin:0 0;">0</div>
<div class="a t" style="left:20.6px;top:171.956px;font:bold 18.400px/18.400px 'Liberation Sans';color:#ffffff;transform:scale(0.2500,0.2500);transform-origin:0 0;">6</div>
<div class="a t" style="left:20.6px;top:175.856px;font:bold 18.400px/18.400px 'Liberation Sans';color:#ffffff;transform:scale(0.2500,0.2500);transform-origin:0 0;">0</div>
<div class="a t" style="left:20.6px;top:187.786px;font:bold 18.400px/18.400px 'Liberation Sans';color:#ffffff;transform:scale(0.2500,0.2500);transform-origin:0 0;">7</div>
<div class="a t" style="left:20.6px;top:191.686px;font:bold 18.400px/18.400px 'Liberation Sans';color:#ffffff;transform:scale(0.2500,0.2500);transform-origin:0 0;">0</div>
<div class="a t" style="left:20.6px;top:203.606px;font:bold 18.400px/18.400px 'Liberation Sans';color:#ffffff;transform:scale(0.2500,0.2500);transform-origin:0 0;">8</div>
<div class="a t" style="left:20.6px;top:207.506px;font:bold 18.400px/18.400px 'Liberation Sans';color:#ffffff;transform:scale(0.2500,0.2500);transform-origin:0 0;">0</div>
<div class="a t" style="left:20.6px;top:219.436px;font:bold 18.400px/18.400px 'Liberation Sans';color:#ffffff;transform:scale(0.2500,0.2500);transform-origin:0 0;">9</div>
<div class="a t" style="left:20.6px;top:223.336px;font:bold 18.400px/18.400px 'Liberation Sans';color:#ffffff;transform:scale(0.2500,0.2500);transform-origin:0 0;">0</div>
<div class="a t" style="left:20.6px;top:235.256px;font:bold 18.400px/18.400px 'Liberation Sans';color:#ffffff;transform:scale(0.2500,0.2500);transform-origin:0 0;">1</div>
<div class="a t" style="left:20.6px;top:239.156px;font:bold 18.400px/18.400px 'Liberation Sans';color:#ffffff;transform:scale(0.2500,0.2500);transform-origin:0 0;">0</div>
<div class="a t" style="left:20.6px;top:243.056px;font:bold 18.400px/18.400px 'Liberation Sans';color:#ffffff;transform:scale(0.2500,0.2500);transform-origin:0 0;">0</div>
<div class="a t" style="left:20.6px;top:251.076px;font:bold 18.400px/18.400px 'Liberation Sans';color:#ffffff;transform:scale(0.2500,0.2500);transform-origin:0 0;">1</div>
<div class="a t" style="left:20.6px;top:254.986px;font:bold 18.400px/18.400px 'Liberation Sans';color:#ffffff;transform:scale(0.2500,0.2500);transform-origin:0 0;">1</div>
<div class="a t" style="left:20.6px;top:258.876px;font:bold 18.400px/18.400px 'Liberation Sans';color:#ffffff;transform:scale(0.2500,0.2500);transform-origin:0 0;">0</div>
<div class="a t" style="left:20.6px;top:266.906px;font:bold 18.400px/18.400px 'Liberation Sans';color:#ffffff;transform:scale(0.2500,0.2500);transform-origin:0 0;">1</div>
<div class="a t" style="left:20.6px;top:270.806px;font:bold 18.400px/18.400px 'Liberation Sans';color:#ffffff;transform:scale(0.2500,0.2500);transform-origin:0 0;">2</div>
<div class="a t" style="left:20.6px;top:274.706px;font:bold 18.400px/18.400px 'Liberation Sans';color:#ffffff;transform:scale(0.2500,0.2500);transform-origin:0 0;">0</div>
<div class="a t" style="left:20.6px;top:282.726px;font:bold 18.400px/18.400px 'Liberation Sans';color:#ffffff;transform:scale(0.2500,0.2500);transform-origin:0 0;">1</div>
<div class="a t" style="left:20.6px;top:286.626px;font:bold 18.400px/18.400px 'Liberation Sans';color:#ffffff;transform:scale(0.2500,0.2500);transform-origin:0 0;">3</div>
<div class="a t" style="left:20.6px;top:290.536px;font:bold 18.400px/18.400px 'Liberation Sans';color:#ffffff;transform:scale(0.2500,0.2500);transform-origin:0 0;">0</div>
<div class="a t" style="left:20.6px;top:298.556px;font:bold 18.400px/18.400px 'Liberation Sans';color:#ffffff;transform:scale(0.2500,0.2500);transform-origin:0 0;">1</div>
<div class="a t" style="left:20.6px;top:302.456px;font:bold 18.400px/18.400px 'Liberation Sans';color:#ffffff;transform:scale(0.2500,0.2500);transform-origin:0 0;">4</div>
<div class="a t" style="left:20.6px;top:306.356px;font:bold 18.400px/18.400px 'Liberation Sans';color:#ffffff;transform:scale(0.2500,0.2500);transform-origin:0 0;">0</div>
<div class="a t" style="left:20.6px;top:314.386px;font:bold 18.400px/18.400px 'Liberation Sans';color:#ffffff;transform:scale(0.2500,0.2500);transform-origin:0 0;">1</div>
<div class="a t" style="left:20.6px;top:318.286px;font:bold 18.400px/18.400px 'Liberation Sans';color:#ffffff;transform:scale(0.2500,0.2500);transform-origin:0 0;">5</div>
<div class="a t" style="left:20.6px;top:322.186px;font:bold 18.400px/18.400px 'Liberation Sans';color:#ffffff;transform:scale(0.2500,0.2500);transform-origin:0 0;">0</div>
<div class="a t" style="left:20.6px;top:330.206px;font:bold 18.400px/18.400px 'Liberation Sans';color:#ffffff;transform:scale(0.2500,0.2500);transform-origin:0 0;">1</div>
<div class="a t" style="left:20.6px;top:334.106px;font:bold 18.400px/18.400px 'Liberation Sans';color:#ffffff;transform:scale(0.2500,0.2500);transform-origin:0 0;">6</div>
<div class="a t" style="left:20.6px;top:338.006px;font:bold 18.400px/18.400px 'Liberation Sans';color:#ffffff;transform:scale(0.2500,0.2500);transform-origin:0 0;">0</div>
<div class="a t" style="left:20.6px;top:346.036px;font:bold 18.400px/18.400px 'Liberation Sans';color:#ffffff;transform:scale(0.2500,0.2500);transform-origin:0 0;">1</div>
<div class="a t" style="left:20.6px;top:349.926px;font:bold 18.400px/18.400px 'Liberation Sans';color:#ffffff;transform:scale(0.2500,0.2500);transform-origin:0 0;">7</div>
<div class="a t" style="left:20.6px;top:353.836px;font:bold 18.400px/18.400px 'Liberation Sans';color:#ffffff;transform:scale(0.2500,0.2500);transform-origin:0 0;">0</div>
<div class="a t" style="left:20.6px;top:361.856px;font:bold 18.400px/18.400px 'Liberation Sans';color:#ffffff;transform:scale(0.2500,0.2500);transform-origin:0 0;">1</div>
<div class="a t" style="left:20.6px;top:365.756px;font:bold 18.400px/18.400px 'Liberation Sans';color:#ffffff;transform:scale(0.2500,0.2500);transform-origin:0 0;">8</div>
<div class="a t" style="left:20.6px;top:369.656px;font:bold 18.400px/18.400px 'Liberation Sans';color:#ffffff;transform:scale(0.2500,0.2500);transform-origin:0 0;">0</div>
<div class="a t" style="left:20.6px;top:377.676px;font:bold 18.400px/18.400px 'Liberation Sans';color:#ffffff;transform:scale(0.2500,0.2500);transform-origin:0 0;">1</div>
<div class="a t" style="left:20.6px;top:381.576px;font:bold 18.400px/18.400px 'Liberation Sans';color:#ffffff;transform:scale(0.2500,0.2500);transform-origin:0 0;">9</div>
<div class="a t" style="left:20.6px;top:385.486px;font:bold 18.400px/18.400px 'Liberation Sans';color:#ffffff;transform:scale(0.2500,0.2500);transform-origin:0 0;">0</div>
<div class="a t" style="left:20.6px;top:393.506px;font:bold 18.400px/18.400px 'Liberation Sans';color:#ffffff;transform:scale(0.2500,0.2500);transform-origin:0 0;">2</div>
<div class="a t" style="left:20.6px;top:397.406px;font:bold 18.400px/18.400px 'Liberation Sans';color:#ffffff;transform:scale(0.2500,0.2500);transform-origin:0 0;">0</div>
<div class="a t" style="left:20.6px;top:401.306px;font:bold 18.400px/18.400px 'Liberation Sans';color:#ffffff;transform:scale(0.2500,0.2500);transform-origin:0 0;">0</div>
<div class="a t" style="left:20.6px;top:409.326px;font:bold 18.400px/18.400px 'Liberation Sans';color:#ffffff;transform:scale(0.2500,0.2500);transform-origin:0 0;">2</div>
<div class="a t" style="left:20.6px;top:413.226px;font:bold 18.400px/18.400px 'Liberation Sans';color:#ffffff;transform:scale(0.2500,0.2500);transform-origin:0 0;">1</div>
<div class="a t" style="left:20.6px;top:417.126px;font:bold 18.400px/18.400px 'Liberation Sans';color:#ffffff;transform:scale(0.2500,0.2500);transform-origin:0 0;">0</div>
<div class="a t" style="left:20.6px;top:425.156px;font:bold 18.400px/18.400px 'Liberation Sans';color:#ffffff;transform:scale(0.2500,0.2500);transform-origin:0 0;">2</div>
<div class="a t" style="left:20.6px;top:429.056px;font:bold 18.400px/18.400px 'Liberation Sans';color:#ffffff;transform:scale(0.2500,0.2500);transform-origin:0 0;">2</div>
<div class="a t" style="left:20.6px;top:432.956px;font:bold 18.400px/18.400px 'Liberation Sans';color:#ffffff;transform:scale(0.2500,0.2500);transform-origin:0 0;">0</div>
<div class="a" style="left:137px;top:77.3px;width:472.6px;height:332.6px;background:#000;"></div>
<div class="a" style="left:136px;top:76px;width:472.5px;height:332.7px;background:#ffffff;"></div>
<svg class="a" style="left:0;top:0" width="800" height="446" viewBox="0 0 800 446"><g fill="none" stroke-width="0.9"><path d="M143.4 400.85V83.45H600.4" stroke="#f090f4"/><path d="M600.4 83.45V400.85H143.4" stroke="#f498f0"/><path d="M143.4 83.45V400.85" stroke="#c484f8"/><path d="M600.4 83.45V400.85" stroke="#c888f6"/></g><g fill="none" stroke="#5f7cc6" stroke-width="0.75"><circle cx="203.9" cy="145.9" r="59.35"/><circle cx="354.05" cy="150.4" r="63.4"/><circle cx="511.5" cy="152.65" r="67.2"/><circle cx="215.05" cy="320.95" r="71.35"/><circle cx="364.8" cy="321.5" r="74.9"/><circle cx="521.5" cy="320.35" r="79.0"/></g><rect x="198.40" y="214.20" width="10.10" height="7.10" fill="none" stroke="#8db8f8" stroke-width="0.8"/><rect x="198.20" y="238.50" width="10.40" height="7.60" fill="none" stroke="#8db8f8" stroke-width="0.8"/><rect x="348.60" y="218.30" width="10.90" height="7.30" fill="none" stroke="#8db8f8" stroke-width="0.8"/><rect x="351.50" y="236.60" width="10.00" height="8.50" fill="none" stroke="#8db8f8" stroke-width="0.8"/><rect x="506.40" y="221.30" width="10.00" height="9.00" fill="none" stroke="#8db8f8" stroke-width="0.8"/><rect x="455.70" y="244.30" width="15.00" height="7.20" fill="none" stroke="#8db8f8" stroke-width="0.8"/></svg>
<div class="a t" style="left:199.2px;top:213.727px;font:normal 37.600px/37.600px 'Liberation Serif';color:#1a1a1a;transform:scale(0.2400,0.2500);transform-origin:0 0;-webkit-text-stroke:1.1px #1a1a1a;">75</div>
<div class="a t" style="left:199.0px;top:237.828px;font:normal 37.600px/37.600px 'Liberation Serif';color:#1a1a1a;transform:scale(0.2400,0.2500);transform-origin:0 0;-webkit-text-stroke:1.1px #1a1a1a;">90</div>
<div class="a t" style="left:349.4px;top:217.828px;font:normal 37.600px/37.600px 'Liberation Serif';color:#1a1a1a;transform:scale(0.2453,0.2500);transform-origin:0 0;-webkit-text-stroke:1.1px #1a1a1a;">80</div>
<div class="a t" style="left:352.3px;top:237.227px;font:normal 37.600px/37.600px 'Liberation Serif';color:#1a1a1a;transform:scale(0.2453,0.2500);transform-origin:0 0;-webkit-text-stroke:1.1px #1a1a1a;">95</div>
<div class="a t" style="left:507.2px;top:222.227px;font:normal 37.600px/37.600px 'Liberation Serif';color:#1a1a1a;transform:scale(0.2453,0.2500);transform-origin:0 0;-webkit-text-stroke:1.1px #1a1a1a;">85</div>
<div class="a t" style="left:456.5px;top:244.227px;font:normal 37.600px/37.600px 'Liberation Serif';color:#1a1a1a;transform:scale(0.2311,0.2500);transform-origin:0 0;-webkit-text-stroke:1.1px #1a1a1a;">100</div>
<svg class="a" style="left:0;top:0" width="800" height="446" viewBox="0 0 800 446"><path d="M741.8 55.8l1.4-1.2 1.4 1.2" fill="none" stroke="#8a8a8a" stroke-width="0.6"/><path d="M741.8 433.6l1.4 1.2 1.4-1.2" fill="none" stroke="#8a8a8a" stroke-width="0.6"/><g fill="#8e8e8e"><rect x="25.2" y="438.6" width="0.7" height="4"/><path d="M28.6 438.6v4l-2.2-2z"/><path d="M36 438.8v3.6l-1.8-1.8z"/><path d="M84.8 438.8v3.6l1.8-1.8z"/><path d="M92.8 438.6v4l2.2-2z"/><rect x="95.4" y="438.6" width="0.7" height="4"/></g></svg>
<div class="a" style="left:41.1px;top:437.8px;width:30px;height:6px;background:#444;"></div>
<div class="a t" style="left:43px;top:438.198px;font:normal 5.200px/5.200px 'Liberation Sans';color:#d0d0d0;">1</div>
<div class="a" style="left:72.4px;top:437.8px;width:5.6px;height:6px;background:#3c3c3c;"></div>
<svg class="a" style="left:0;top:0" width="800" height="446" viewBox="0 0 800 446"><path d="M73.8 440.2l1.4 1.1 1.4-1.1" fill="none" stroke="#dadada" stroke-width="0.7"/><path d="M104.2 443.2a2.9 2.9 0 1 1 4.6-3.2" fill="none" stroke="#c4c4c4" stroke-width="1.1"/><path d="M106.3 440.4l2.6 3" stroke="#c4c4c4" stroke-width="0.9"/><rect x="109.4" y="443" width="0.8" height="0.8" fill="#999"/></svg>
<div class="a" style="left:115.2px;top:438px;width:0.6px;height:5.6px;background:#3c3c3c;"></div>
<div class="a t" style="left:117px;top:438.798px;font:normal 5.200px/5.200px 'Liberation Sans';color:#c8c8c8;transform:scaleX(0.8502);transform-origin:0 0;">[Standard] (de tra...</div>
<svg class="a" style="left:0;top:0" width="800" height="446" viewBox="0 0 800 446"><path d="M160.2 440.2l1.3 1.1 1.3-1.1" fill="none" stroke="#b0b0b0" stroke-width="0.6"/><circle cx="171.6" cy="440.7" r="2.4" fill="#3aac3a"/></svg>
<div class="a t" style="left:177px;top:438.798px;font:normal 5.200px/5.200px 'Liberation Sans';color:#c8c8c8;transform:scaleX(0.8213);transform-origin:0 0;">Aucune erreur</div>
<svg class="a" style="left:0;top:0" width="800" height="446" viewBox="0 0 800 446"><path d="M207.8 440.2l1.3 1.1 1.3-1.1" fill="none" stroke="#b0b0b0" stroke-width="0.6"/><path d="M217 439.2l-1.1 1.4 1.1 1.4" fill="none" stroke="#8a8a8a" stroke-width="0.7"/><path d="M726.6 439.2l1.1 1.4-1.1 1.4" fill="none" stroke="#8a8a8a" stroke-width="0.6"/><g fill="none" stroke="#d0d0d0" stroke-width="0.7"><rect x="732.6" y="437.8" width="6.4" height="5.4" rx="0.6"/><path d="M735.8 437.8v5.4"/></g></svg>
<div class="a" style="left:797.6px;top:45px;width:2.4px;height:398.4px;background:#4e4e4e;"></div>
<div class="a" style="left:747.8px;top:84.7px;width:50px;height:1.1px;background:#424242;"></div>
<div class="a" style="left:747.8px;top:125.9px;width:50px;height:1.1px;background:#424242;"></div>
<div class="a" style="left:747.8px;top:166.8px;width:50px;height:1.1px;background:#424242;"></div>
<div class="a" style="left:747.8px;top:196.1px;width:50px;height:1.1px;background:#424242;"></div>
<div class="a" style="left:768.2px;top:46.699999999999996px;width:8px;height:1.1px;background:#3c3c3c;"></div>
<div class="a" style="left:768.2px;top:87.60000000000001px;width:8px;height:1.1px;background:#3c3c3c;"></div>
<div class="a" style="left:768.2px;top:128.20000000000002px;width:8px;height:1.1px;background:#3c3c3c;"></div>
<div class="a" style="left:768.2px;top:169.0px;width:8px;height:1.1px;background:#3c3c3c;"></div>
<div class="a t" style="left:763px;top:52.729px;font:normal 5.400px/5.400px 'Liberation Sans';color:#e4e4e4;transform:scaleX(0.8505);transform-origin:0 0;-webkit-text-stroke:0.15px #dadada;">Pages</div>
<div class="a t" style="left:763px;top:64.929px;font:normal 5.400px/5.400px 'Liberation Sans';color:#e4e4e4;transform:scaleX(0.8595);transform-origin:0 0;-webkit-text-stroke:0.15px #dadada;">Calques</div>
<div class="a t" style="left:763px;top:76.229px;font:normal 5.400px/5.400px 'Liberation Sans';color:#e4e4e4;transform:scaleX(0.8924);transform-origin:0 0;-webkit-text-stroke:0.15px #dadada;">Liens</div>
<div class="a t" style="left:763px;top:93.629px;font:normal 5.400px/5.400px 'Liberation Sans';color:#e4e4e4;transform:scaleX(0.9386);transform-origin:0 0;-webkit-text-stroke:0.15px #dadada;">Contour</div>
<div class="a t" style="left:763px;top:105.429px;font:normal 5.400px/5.400px 'Liberation Sans';color:#e4e4e4;transform:scaleX(0.9005);transform-origin:0 0;-webkit-text-stroke:0.15px #dadada;">Couleur</div>
<div class="a t" style="left:763px;top:116.729px;font:normal 5.400px/5.400px 'Liberation Sans';color:#e4e4e4;transform:scaleX(0.9039);transform-origin:0 0;-webkit-text-stroke:0.15px #dadada;">Nuancier</div>
<div class="a t" style="left:763px;top:134.529px;font:normal 5.400px/5.400px 'Liberation Sans';color:#e4e4e4;transform:scaleX(0.8874);transform-origin:0 0;-webkit-text-stroke:0.15px #dadada;">Paragraphe</div>
<div class="a t" style="left:763px;top:146.329px;font:normal 5.400px/5.400px 'Liberation Sans';color:#e4e4e4;transform:scaleX(0.8450);transform-origin:0 0;-webkit-text-stroke:0.15px #dadada;">Caractère</div>
<div class="a t" style="left:763px;top:158.129px;font:normal 5.400px/5.400px 'Liberation Sans';color:#e4e4e4;transform:scaleX(0.9217);transform-origin:0 0;-webkit-text-stroke:0.15px #dadada;">Habillage d...</div>
<div class="a t" style="left:763px;top:174.929px;font:normal 5.400px/5.400px 'Liberation Sans';color:#e4e4e4;transform:scaleX(0.9270);transform-origin:0 0;-webkit-text-stroke:0.15px #dadada;">Alignement</div>
<div class="a t" style="left:763px;top:186.529px;font:normal 5.400px/5.400px 'Liberation Sans';color:#e4e4e4;transform:scaleX(0.9360);transform-origin:0 0;-webkit-text-stroke:0.15px #dadada;">Pathfinder</div>
<svg class="a" style="left:0;top:0" width="800" height="446" viewBox="0 0 800 446"><g fill="#d4d4d4"><rect x="752.2" y="53" width="3.2" height="5"/><rect x="756.4" y="53" width="3.2" height="5"/></g><path d="M755.9 50.8v8.2" stroke="#d4d4d4" stroke-width="0.5"/><path d="M755.8 62.4l3.8 2.1-3.8 2.1-3.8-2.1z" fill="#d4d4d4"/><path d="M752 66.8l3.8 2.1 3.8-2.1" fill="none" stroke="#d4d4d4" stroke-width="0.8"/><g fill="none" stroke="#d4d4d4" stroke-width="0.8"><rect x="751.4" y="76.8" width="4.4" height="3.2" rx="1.6"/><rect x="755.2" y="76.8" width="4.4" height="3.2" rx="1.6"/></g><g fill="#d4d4d4"><rect x="752.2" y="92" width="7" height="0.8" opacity="0.7"/><rect x="752.2" y="93.8" width="7" height="0.9" opacity="0.7"/><rect x="752.2" y="95.8" width="7" height="0.9" opacity="0.7"/><rect x="752.2" y="97.6" width="7" height="1"/></g><ellipse cx="755.6" cy="108" rx="4.2" ry="2.6" fill="none" stroke="#d4d4d4" stroke-width="0.8"/><g fill="#d4d4d4"><circle cx="754" cy="108.6" r="0.7"/><circle cx="756" cy="108.8" r="0.7"/><circle cx="757.6" cy="107.6" r="0.8"/></g><path d="M756.4 105.2a2 2 0 0 1 3 0.6" fill="none" stroke="#d4d4d4" stroke-width="0.6"/><rect x="752.2" y="117" width="6.8" height="5.2" fill="none" stroke="#d4d4d4" stroke-width="0.7"/><g fill="#d4d4d4"><rect x="753.2" y="118" width="1.6" height="1.4"/><rect x="756.2" y="118" width="1.6" height="1.4"/><rect x="753.2" y="120" width="1.6" height="1.4"/></g><path d="M754.8 134.6h-0.6a1.4 1.4 0 0 0 0 2.8h0.6z" fill="#d4d4d4"/><path d="M754.8 134.4h1.2v5.2" fill="none" stroke="#d4d4d4" stroke-width="0.6"/><rect x="757.8" y="134.2" width="0.6" height="6" fill="#d4d4d4"/><path d="M752.2 151.4l2.2-5.6h0.6l2.2 5.6M753.2 149.4h2.8" fill="none" stroke="#d4d4d4" stroke-width="0.7"/><rect x="758.4" y="145.6" width="0.5" height="6" fill="#d4d4d4"/><g fill="#d4d4d4"><rect x="752.2" y="156.8" width="7" height="0.6"/><rect x="752.2" y="162" width="7" height="0.6"/><rect x="752.2" y="158.6" width="2" height="0.6"/><rect x="757.2" y="158.6" width="2" height="0.6"/><rect x="752.2" y="160.2" width="2" height="0.6"/><rect x="757.2" y="160.2" width="2" height="0.6"/><circle cx="755.7" cy="159.8" r="1.2"/></g><g fill="#d4d4d4"><rect x="752.4" y="173" width="0.6" height="8"/><rect x="753.8" y="175" width="2.4" height="2"/><rect x="753.8" y="178.2" width="5.4" height="2"/></g><g fill="#d4d4d4"><rect x="752.2" y="186" width="3.8" height="3.6"/><rect x="755.2" y="188.6" width="3.8" height="3.6" opacity="0.85"/></g><path d="M792.6 41.6l-1.2 1 1.2 1M795 41.6l-1.2 1 1.2 1" fill="none" stroke="#d0d0d0" stroke-width="0.6"/></svg>
</div>
</body></html>
